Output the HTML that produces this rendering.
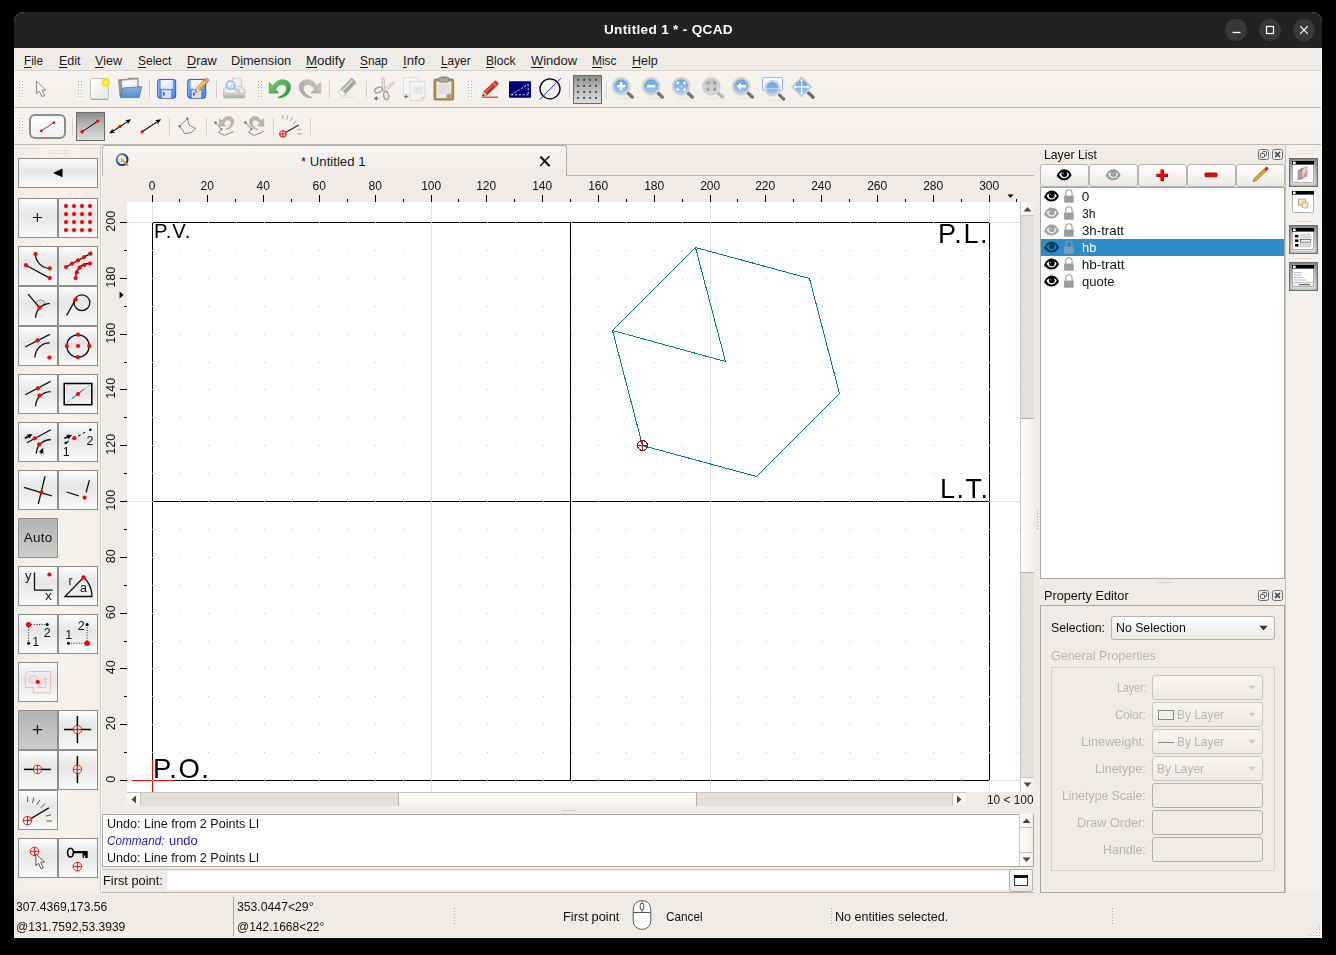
<!DOCTYPE html>
<html><head><meta charset="utf-8"><title>QCAD</title>
<style>
html,body{margin:0;padding:0;background:#000;}
body{width:1336px;height:955px;position:relative;overflow:hidden;font-family:"Liberation Sans",sans-serif;}
.t{position:absolute;white-space:pre;}
svg{overflow:visible}
.btn{position:absolute;box-sizing:border-box;border:1px solid #8e8e8e;background:linear-gradient(#fbfbfb 0%,#e6e6e6 42%,#ececec 60%,#fafafa 100%);}
.btn.on{background:linear-gradient(#b4b4b4,#cdcdcd);}
</style></head><body>
<div style="position:absolute;left:14px;top:12px;width:1308px;height:926px;background:#efebe7;border-radius:10px 10px 0 0;overflow:hidden;"></div>
<div style="position:absolute;left:14px;top:12px;width:1308px;height:36px;background:#222222;border-radius:10px 10px 0 0;"></div>
<span class="t" style="left:603.80px;top:23.09px;font-size:13.6px;line-height:13.6px;color:#ffffff;letter-spacing:0.308px;font-weight:bold;will-change:transform;">Untitled 1 * - QCAD</span>
<div style="position:absolute;left:1225px;top:19px;width:22px;height:22px;background:#383838;border-radius:11px;"></div>
<div style="position:absolute;left:1259px;top:19px;width:22px;height:22px;background:#383838;border-radius:11px;"></div>
<div style="position:absolute;left:1293px;top:19px;width:22px;height:22px;background:#383838;border-radius:11px;"></div>
<svg style="position:absolute;left:1225px;top:19px;" width="22" height="22" viewBox="0 0 22 22"><path d="M7.5 13.5h8" stroke="#fff" stroke-width="1.3" fill="none"/></svg>
<svg style="position:absolute;left:1259px;top:19px;" width="22" height="22" viewBox="0 0 22 22"><rect x="7.5" y="7.5" width="7" height="7" stroke="#fff" stroke-width="1.2" fill="none"/></svg>
<svg style="position:absolute;left:1293px;top:19px;" width="22" height="22" viewBox="0 0 22 22"><path d="M7.2 7.2l7.6 7.6M14.8 7.2l-7.6 7.6" stroke="#fff" stroke-width="1.2" fill="none"/></svg>
<div style="position:absolute;left:14px;top:48px;width:1308px;height:22px;background:#efebe7;"></div>
<div style="position:absolute;left:14px;top:70px;width:1308px;height:1px;background:#d6d2cc;"></div>
<span class="t" style="left:24.30px;top:53.57px;font-size:13.5px;line-height:13.5px;color:#1a1a1a;transform:scaleX(0.8689);transform-origin:0 0;text-underline-offset:1.5px;"><u>F</u>ile</span>
<span class="t" style="left:58.60px;top:53.57px;font-size:13.5px;line-height:13.5px;color:#1a1a1a;transform:scaleX(0.9242);transform-origin:0 0;text-underline-offset:1.5px;"><u>E</u>dit</span>
<span class="t" style="left:95.00px;top:53.57px;font-size:13.5px;line-height:13.5px;color:#1a1a1a;transform:scaleX(0.9339);transform-origin:0 0;text-underline-offset:1.5px;"><u>V</u>iew</span>
<span class="t" style="left:137.60px;top:53.57px;font-size:13.5px;line-height:13.5px;color:#1a1a1a;transform:scaleX(0.8875);transform-origin:0 0;text-underline-offset:1.5px;"><u>S</u>elect</span>
<span class="t" style="left:186.60px;top:53.57px;font-size:13.5px;line-height:13.5px;color:#1a1a1a;transform:scaleX(0.9396);transform-origin:0 0;text-underline-offset:1.5px;"><u>D</u>raw</span>
<span class="t" style="left:231.20px;top:53.57px;font-size:13.5px;line-height:13.5px;color:#1a1a1a;transform:scaleX(0.9424);transform-origin:0 0;text-underline-offset:1.5px;">D<u>i</u>mension</span>
<span class="t" style="left:306.30px;top:53.57px;font-size:13.5px;line-height:13.5px;color:#1a1a1a;transform:scaleX(0.9809);transform-origin:0 0;text-underline-offset:1.5px;"><u>M</u>odify</span>
<span class="t" style="left:360.00px;top:53.57px;font-size:13.5px;line-height:13.5px;color:#1a1a1a;transform:scaleX(0.8786);transform-origin:0 0;text-underline-offset:1.5px;"><u>S</u>nap</span>
<span class="t" style="left:403.20px;top:53.57px;font-size:13.5px;line-height:13.5px;color:#1a1a1a;transform:scaleX(0.9771);transform-origin:0 0;text-underline-offset:1.5px;"><u>I</u>nfo</span>
<span class="t" style="left:440.60px;top:53.57px;font-size:13.5px;line-height:13.5px;color:#1a1a1a;transform:scaleX(0.8766);transform-origin:0 0;text-underline-offset:1.5px;"><u>L</u>ayer</span>
<span class="t" style="left:485.90px;top:53.57px;font-size:13.5px;line-height:13.5px;color:#1a1a1a;transform:scaleX(0.8967);transform-origin:0 0;text-underline-offset:1.5px;"><u>B</u>lock</span>
<span class="t" style="left:531.00px;top:53.57px;font-size:13.5px;line-height:13.5px;color:#1a1a1a;transform:scaleX(0.9601);transform-origin:0 0;text-underline-offset:1.5px;"><u>W</u>indow</span>
<span class="t" style="left:592.30px;top:53.57px;font-size:13.5px;line-height:13.5px;color:#1a1a1a;transform:scaleX(0.8831);transform-origin:0 0;text-underline-offset:1.5px;"><u>M</u>isc</span>
<span class="t" style="left:632.30px;top:53.57px;font-size:13.5px;line-height:13.5px;color:#1a1a1a;transform:scaleX(0.9257);transform-origin:0 0;text-underline-offset:1.5px;"><u>H</u>elp</span>
<div style="position:absolute;left:14px;top:71px;width:1308px;height:36px;background:linear-gradient(#f7f4f0,#f3f0eb);"></div>
<div style="position:absolute;left:14px;top:107px;width:1308px;height:1px;background:#bdb9b4;"></div>
<div style="position:absolute;left:14px;top:108px;width:1308px;height:36px;background:linear-gradient(#f7f4f0,#f3f0eb);"></div>
<div style="position:absolute;left:14px;top:144px;width:1308px;height:1px;background:#bdb9b4;"></div>
<div style="position:absolute;left:100px;top:145px;width:1px;height:748px;background:#cfcbc6;"></div>
<div style="position:absolute;left:101px;top:145px;width:1px;height:748px;background:#fbfaf8;"></div>
<div style="position:absolute;left:102px;top:145px;width:465px;height:31px;background:linear-gradient(#f8f6f2,#efebe7);border:1px solid #b4b0ab;border-bottom:none;border-radius:3px 3px 0 0;box-sizing:border-box;"></div>
<div style="position:absolute;left:567px;top:175px;width:467px;height:1px;background:#bab6b1;"></div>
<span class="t" style="left:301.00px;top:155.37px;font-size:13.5px;line-height:13.5px;color:#1a1a1a;transform:scaleX(0.9768);transform-origin:0 0;">* Untitled 1</span>
<svg style="position:absolute;left:537px;top:153px;" width="16" height="16" viewBox="0 0 16 16"><path d="M4 4.2 L12 12.4" stroke="#111" stroke-width="2.1" stroke-linecap="round" fill="none"/><path d="M12.2 3.4 L3.6 12.6" stroke="#111" stroke-width="1.4" stroke-linecap="round" fill="none"/></svg>
<svg style="position:absolute;left:0px;top:0px;" width="1336" height="955" viewBox="0 0 1336 955"><path d="M152.5 195v7M179.5 199v3M207.5 195v7M235.5 199v3M263.5 195v7M291.5 199v3M319.5 195v7M347.5 199v3M375.5 195v7M403.5 199v3M431.5 195v7M458.5 199v3M486.5 195v7M514.5 199v3M542.5 195v7M570.5 199v3M598.5 195v7M626.5 199v3M654.5 195v7M682.5 199v3M710.5 195v7M737.5 199v3M765.5 195v7M793.5 199v3M821.5 195v7M849.5 199v3M877.5 195v7M905.5 199v3M933.5 195v7M961.5 199v3M989.5 195v7M1016.5 199v3M120 780.5h7M124 752.5h3M120 724.5h7M124 696.5h3M120 668.5h7M124 641.5h3M120 613.5h7M124 585.5h3M120 557.5h7M124 529.5h3M120 501.5h7M124 473.5h3M120 445.5h7M124 417.5h3M120 389.5h7M124 362.5h3M120 334.5h7M124 306.5h3M120 278.5h7M124 250.5h3M120 222.5h7" stroke="#000" stroke-width="1" fill="none" shape-rendering="crispEdges"/></svg>
<span class="t" style="left:148.86px;top:179.84px;font-size:12px;line-height:12px;color:#111;">0</span>
<span class="t" style="left:200.53px;top:179.84px;font-size:12px;line-height:12px;color:#111;">20</span>
<span class="t" style="left:256.53px;top:179.84px;font-size:12px;line-height:12px;color:#111;">40</span>
<span class="t" style="left:312.53px;top:179.84px;font-size:12px;line-height:12px;color:#111;">60</span>
<span class="t" style="left:368.53px;top:179.84px;font-size:12px;line-height:12px;color:#111;">80</span>
<span class="t" style="left:421.19px;top:179.84px;font-size:12px;line-height:12px;color:#111;">100</span>
<span class="t" style="left:476.19px;top:179.84px;font-size:12px;line-height:12px;color:#111;">120</span>
<span class="t" style="left:532.19px;top:179.84px;font-size:12px;line-height:12px;color:#111;">140</span>
<span class="t" style="left:588.19px;top:179.84px;font-size:12px;line-height:12px;color:#111;">160</span>
<span class="t" style="left:644.19px;top:179.84px;font-size:12px;line-height:12px;color:#111;">180</span>
<span class="t" style="left:700.19px;top:179.84px;font-size:12px;line-height:12px;color:#111;">200</span>
<span class="t" style="left:755.19px;top:179.84px;font-size:12px;line-height:12px;color:#111;">220</span>
<span class="t" style="left:811.19px;top:179.84px;font-size:12px;line-height:12px;color:#111;">240</span>
<span class="t" style="left:867.19px;top:179.84px;font-size:12px;line-height:12px;color:#111;">260</span>
<span class="t" style="left:923.19px;top:179.84px;font-size:12px;line-height:12px;color:#111;">280</span>
<span class="t" style="left:979.19px;top:179.84px;font-size:12px;line-height:12px;color:#111;">300</span>
<span class="t" style="left:107.82px;top:773.05px;width:6.95px;height:12.5px;font-size:12.5px;line-height:12.5px;color:#111;transform:rotate(-90deg);transform-origin:50% 50%;text-align:center;">0</span>
<span class="t" style="left:104.35px;top:717.05px;width:13.90px;height:12.5px;font-size:12.5px;line-height:12.5px;color:#111;transform:rotate(-90deg);transform-origin:50% 50%;text-align:center;">20</span>
<span class="t" style="left:104.35px;top:661.05px;width:13.90px;height:12.5px;font-size:12.5px;line-height:12.5px;color:#111;transform:rotate(-90deg);transform-origin:50% 50%;text-align:center;">40</span>
<span class="t" style="left:104.35px;top:606.05px;width:13.90px;height:12.5px;font-size:12.5px;line-height:12.5px;color:#111;transform:rotate(-90deg);transform-origin:50% 50%;text-align:center;">60</span>
<span class="t" style="left:104.35px;top:550.05px;width:13.90px;height:12.5px;font-size:12.5px;line-height:12.5px;color:#111;transform:rotate(-90deg);transform-origin:50% 50%;text-align:center;">80</span>
<span class="t" style="left:100.87px;top:494.05px;width:20.85px;height:12.5px;font-size:12.5px;line-height:12.5px;color:#111;transform:rotate(-90deg);transform-origin:50% 50%;text-align:center;">100</span>
<span class="t" style="left:100.87px;top:438.05px;width:20.85px;height:12.5px;font-size:12.5px;line-height:12.5px;color:#111;transform:rotate(-90deg);transform-origin:50% 50%;text-align:center;">120</span>
<span class="t" style="left:100.87px;top:382.05px;width:20.85px;height:12.5px;font-size:12.5px;line-height:12.5px;color:#111;transform:rotate(-90deg);transform-origin:50% 50%;text-align:center;">140</span>
<span class="t" style="left:100.87px;top:327.05px;width:20.85px;height:12.5px;font-size:12.5px;line-height:12.5px;color:#111;transform:rotate(-90deg);transform-origin:50% 50%;text-align:center;">160</span>
<span class="t" style="left:100.87px;top:271.05px;width:20.85px;height:12.5px;font-size:12.5px;line-height:12.5px;color:#111;transform:rotate(-90deg);transform-origin:50% 50%;text-align:center;">180</span>
<span class="t" style="left:100.87px;top:215.05px;width:20.85px;height:12.5px;font-size:12.5px;line-height:12.5px;color:#111;transform:rotate(-90deg);transform-origin:50% 50%;text-align:center;">200</span>
<svg style="position:absolute;left:0px;top:0px;" width="1336" height="955" viewBox="0 0 1336 955"><path d="M1007.5 194.5h6l-3 3.5z M119.6 291.6v7l4-3.5z" fill="#000"/></svg>
<div style="position:absolute;left:127px;top:202px;width:893px;height:590px;background:#fff;"></div>
<svg style="position:absolute;left:0px;top:0px;" width="1336" height="955" viewBox="0 0 1336 955"><path d="M152.5 202V792M431.5 202V792M710.5 202V792M989.5 202V792M127 780.5H1020M127 501.5H1020M127 222.5H1020" stroke="#e6e6e6" stroke-width="1" fill="none" shape-rendering="crispEdges"/><path d="M132 780.5H173M152.5 760V792" stroke="#ff0000" stroke-width="1" fill="none" shape-rendering="crispEdges"/><path d="M152.5 222.5H989.5V780.5H152.5V760M152.5 222.5V760M570.5 222.5V780.5M152.5 501.5H989.5" stroke="#000" stroke-width="1" fill="none" shape-rendering="crispEdges"/><path d="M132 780.5H173M152.5 760V792" stroke="#ff0000" stroke-width="1" fill="none" shape-rendering="crispEdges"/><path d="M695.5 247.5 L809.5 278.5 L839.5 393.5 L756.5 476.5 L642.5 445.5 L612.5 330.5 L695.5 247.5 L725.5 361.5 L612.5 330.5" stroke="#008088" stroke-width="1" fill="none" shape-rendering="crispEdges"/><g stroke="#a01818" stroke-width="1" fill="none" shape-rendering="crispEdges"><circle cx="642.5" cy="445.5" r="5"/><path d="M637 445.5H648M642.5 440V451"/></g><path d="M152 780.5h1M152 752.5h1M152 724.5h1M152 696.5h1M152 668.5h1M152 641.5h1M152 613.5h1M152 585.5h1M152 557.5h1M152 529.5h1M152 501.5h1M152 473.5h1M152 445.5h1M152 417.5h1M152 389.5h1M152 362.5h1M152 334.5h1M152 306.5h1M152 278.5h1M152 250.5h1M152 222.5h1M180 780.5h1M180 752.5h1M180 724.5h1M180 696.5h1M180 668.5h1M180 641.5h1M180 613.5h1M180 585.5h1M180 557.5h1M180 529.5h1M180 501.5h1M180 473.5h1M180 445.5h1M180 417.5h1M180 389.5h1M180 362.5h1M180 334.5h1M180 306.5h1M180 278.5h1M180 250.5h1M180 222.5h1M208 780.5h1M208 752.5h1M208 724.5h1M208 696.5h1M208 668.5h1M208 641.5h1M208 613.5h1M208 585.5h1M208 557.5h1M208 529.5h1M208 501.5h1M208 473.5h1M208 445.5h1M208 417.5h1M208 389.5h1M208 362.5h1M208 334.5h1M208 306.5h1M208 278.5h1M208 250.5h1M208 222.5h1M236 780.5h1M236 752.5h1M236 724.5h1M236 696.5h1M236 668.5h1M236 641.5h1M236 613.5h1M236 585.5h1M236 557.5h1M236 529.5h1M236 501.5h1M236 473.5h1M236 445.5h1M236 417.5h1M236 389.5h1M236 362.5h1M236 334.5h1M236 306.5h1M236 278.5h1M236 250.5h1M236 222.5h1M264 780.5h1M264 752.5h1M264 724.5h1M264 696.5h1M264 668.5h1M264 641.5h1M264 613.5h1M264 585.5h1M264 557.5h1M264 529.5h1M264 501.5h1M264 473.5h1M264 445.5h1M264 417.5h1M264 389.5h1M264 362.5h1M264 334.5h1M264 306.5h1M264 278.5h1M264 250.5h1M264 222.5h1M292 780.5h1M292 752.5h1M292 724.5h1M292 696.5h1M292 668.5h1M292 641.5h1M292 613.5h1M292 585.5h1M292 557.5h1M292 529.5h1M292 501.5h1M292 473.5h1M292 445.5h1M292 417.5h1M292 389.5h1M292 362.5h1M292 334.5h1M292 306.5h1M292 278.5h1M292 250.5h1M292 222.5h1M319 780.5h1M319 752.5h1M319 724.5h1M319 696.5h1M319 668.5h1M319 641.5h1M319 613.5h1M319 585.5h1M319 557.5h1M319 529.5h1M319 501.5h1M319 473.5h1M319 445.5h1M319 417.5h1M319 389.5h1M319 362.5h1M319 334.5h1M319 306.5h1M319 278.5h1M319 250.5h1M319 222.5h1M347 780.5h1M347 752.5h1M347 724.5h1M347 696.5h1M347 668.5h1M347 641.5h1M347 613.5h1M347 585.5h1M347 557.5h1M347 529.5h1M347 501.5h1M347 473.5h1M347 445.5h1M347 417.5h1M347 389.5h1M347 362.5h1M347 334.5h1M347 306.5h1M347 278.5h1M347 250.5h1M347 222.5h1M375 780.5h1M375 752.5h1M375 724.5h1M375 696.5h1M375 668.5h1M375 641.5h1M375 613.5h1M375 585.5h1M375 557.5h1M375 529.5h1M375 501.5h1M375 473.5h1M375 445.5h1M375 417.5h1M375 389.5h1M375 362.5h1M375 334.5h1M375 306.5h1M375 278.5h1M375 250.5h1M375 222.5h1M403 780.5h1M403 752.5h1M403 724.5h1M403 696.5h1M403 668.5h1M403 641.5h1M403 613.5h1M403 585.5h1M403 557.5h1M403 529.5h1M403 501.5h1M403 473.5h1M403 445.5h1M403 417.5h1M403 389.5h1M403 362.5h1M403 334.5h1M403 306.5h1M403 278.5h1M403 250.5h1M403 222.5h1M431 780.5h1M431 752.5h1M431 724.5h1M431 696.5h1M431 668.5h1M431 641.5h1M431 613.5h1M431 585.5h1M431 557.5h1M431 529.5h1M431 501.5h1M431 473.5h1M431 445.5h1M431 417.5h1M431 389.5h1M431 362.5h1M431 334.5h1M431 306.5h1M431 278.5h1M431 250.5h1M431 222.5h1M459 780.5h1M459 752.5h1M459 724.5h1M459 696.5h1M459 668.5h1M459 641.5h1M459 613.5h1M459 585.5h1M459 557.5h1M459 529.5h1M459 501.5h1M459 473.5h1M459 445.5h1M459 417.5h1M459 389.5h1M459 362.5h1M459 334.5h1M459 306.5h1M459 278.5h1M459 250.5h1M459 222.5h1M487 780.5h1M487 752.5h1M487 724.5h1M487 696.5h1M487 668.5h1M487 641.5h1M487 613.5h1M487 585.5h1M487 557.5h1M487 529.5h1M487 501.5h1M487 473.5h1M487 445.5h1M487 417.5h1M487 389.5h1M487 362.5h1M487 334.5h1M487 306.5h1M487 278.5h1M487 250.5h1M487 222.5h1M515 780.5h1M515 752.5h1M515 724.5h1M515 696.5h1M515 668.5h1M515 641.5h1M515 613.5h1M515 585.5h1M515 557.5h1M515 529.5h1M515 501.5h1M515 473.5h1M515 445.5h1M515 417.5h1M515 389.5h1M515 362.5h1M515 334.5h1M515 306.5h1M515 278.5h1M515 250.5h1M515 222.5h1M543 780.5h1M543 752.5h1M543 724.5h1M543 696.5h1M543 668.5h1M543 641.5h1M543 613.5h1M543 585.5h1M543 557.5h1M543 529.5h1M543 501.5h1M543 473.5h1M543 445.5h1M543 417.5h1M543 389.5h1M543 362.5h1M543 334.5h1M543 306.5h1M543 278.5h1M543 250.5h1M543 222.5h1M571 780.5h1M571 752.5h1M571 724.5h1M571 696.5h1M571 668.5h1M571 641.5h1M571 613.5h1M571 585.5h1M571 557.5h1M571 529.5h1M571 501.5h1M571 473.5h1M571 445.5h1M571 417.5h1M571 389.5h1M571 362.5h1M571 334.5h1M571 306.5h1M571 278.5h1M571 250.5h1M571 222.5h1M598 780.5h1M598 752.5h1M598 724.5h1M598 696.5h1M598 668.5h1M598 641.5h1M598 613.5h1M598 585.5h1M598 557.5h1M598 529.5h1M598 501.5h1M598 473.5h1M598 445.5h1M598 417.5h1M598 389.5h1M598 362.5h1M598 334.5h1M598 306.5h1M598 278.5h1M598 250.5h1M598 222.5h1M626 780.5h1M626 752.5h1M626 724.5h1M626 696.5h1M626 668.5h1M626 641.5h1M626 613.5h1M626 585.5h1M626 557.5h1M626 529.5h1M626 501.5h1M626 473.5h1M626 445.5h1M626 417.5h1M626 389.5h1M626 362.5h1M626 334.5h1M626 306.5h1M626 278.5h1M626 250.5h1M626 222.5h1M654 780.5h1M654 752.5h1M654 724.5h1M654 696.5h1M654 668.5h1M654 641.5h1M654 613.5h1M654 585.5h1M654 557.5h1M654 529.5h1M654 501.5h1M654 473.5h1M654 445.5h1M654 417.5h1M654 389.5h1M654 362.5h1M654 334.5h1M654 306.5h1M654 278.5h1M654 250.5h1M654 222.5h1M682 780.5h1M682 752.5h1M682 724.5h1M682 696.5h1M682 668.5h1M682 641.5h1M682 613.5h1M682 585.5h1M682 557.5h1M682 529.5h1M682 501.5h1M682 473.5h1M682 445.5h1M682 417.5h1M682 389.5h1M682 362.5h1M682 334.5h1M682 306.5h1M682 278.5h1M682 250.5h1M682 222.5h1M710 780.5h1M710 752.5h1M710 724.5h1M710 696.5h1M710 668.5h1M710 641.5h1M710 613.5h1M710 585.5h1M710 557.5h1M710 529.5h1M710 501.5h1M710 473.5h1M710 445.5h1M710 417.5h1M710 389.5h1M710 362.5h1M710 334.5h1M710 306.5h1M710 278.5h1M710 250.5h1M710 222.5h1M738 780.5h1M738 752.5h1M738 724.5h1M738 696.5h1M738 668.5h1M738 641.5h1M738 613.5h1M738 585.5h1M738 557.5h1M738 529.5h1M738 501.5h1M738 473.5h1M738 445.5h1M738 417.5h1M738 389.5h1M738 362.5h1M738 334.5h1M738 306.5h1M738 278.5h1M738 250.5h1M738 222.5h1M766 780.5h1M766 752.5h1M766 724.5h1M766 696.5h1M766 668.5h1M766 641.5h1M766 613.5h1M766 585.5h1M766 557.5h1M766 529.5h1M766 501.5h1M766 473.5h1M766 445.5h1M766 417.5h1M766 389.5h1M766 362.5h1M766 334.5h1M766 306.5h1M766 278.5h1M766 250.5h1M766 222.5h1M794 780.5h1M794 752.5h1M794 724.5h1M794 696.5h1M794 668.5h1M794 641.5h1M794 613.5h1M794 585.5h1M794 557.5h1M794 529.5h1M794 501.5h1M794 473.5h1M794 445.5h1M794 417.5h1M794 389.5h1M794 362.5h1M794 334.5h1M794 306.5h1M794 278.5h1M794 250.5h1M794 222.5h1M822 780.5h1M822 752.5h1M822 724.5h1M822 696.5h1M822 668.5h1M822 641.5h1M822 613.5h1M822 585.5h1M822 557.5h1M822 529.5h1M822 501.5h1M822 473.5h1M822 445.5h1M822 417.5h1M822 389.5h1M822 362.5h1M822 334.5h1M822 306.5h1M822 278.5h1M822 250.5h1M822 222.5h1M850 780.5h1M850 752.5h1M850 724.5h1M850 696.5h1M850 668.5h1M850 641.5h1M850 613.5h1M850 585.5h1M850 557.5h1M850 529.5h1M850 501.5h1M850 473.5h1M850 445.5h1M850 417.5h1M850 389.5h1M850 362.5h1M850 334.5h1M850 306.5h1M850 278.5h1M850 250.5h1M850 222.5h1M877 780.5h1M877 752.5h1M877 724.5h1M877 696.5h1M877 668.5h1M877 641.5h1M877 613.5h1M877 585.5h1M877 557.5h1M877 529.5h1M877 501.5h1M877 473.5h1M877 445.5h1M877 417.5h1M877 389.5h1M877 362.5h1M877 334.5h1M877 306.5h1M877 278.5h1M877 250.5h1M877 222.5h1M905 780.5h1M905 752.5h1M905 724.5h1M905 696.5h1M905 668.5h1M905 641.5h1M905 613.5h1M905 585.5h1M905 557.5h1M905 529.5h1M905 501.5h1M905 473.5h1M905 445.5h1M905 417.5h1M905 389.5h1M905 362.5h1M905 334.5h1M905 306.5h1M905 278.5h1M905 250.5h1M905 222.5h1M933 780.5h1M933 752.5h1M933 724.5h1M933 696.5h1M933 668.5h1M933 641.5h1M933 613.5h1M933 585.5h1M933 557.5h1M933 529.5h1M933 501.5h1M933 473.5h1M933 445.5h1M933 417.5h1M933 389.5h1M933 362.5h1M933 334.5h1M933 306.5h1M933 278.5h1M933 250.5h1M933 222.5h1M961 780.5h1M961 752.5h1M961 724.5h1M961 696.5h1M961 668.5h1M961 641.5h1M961 613.5h1M961 585.5h1M961 557.5h1M961 529.5h1M961 501.5h1M961 473.5h1M961 445.5h1M961 417.5h1M961 389.5h1M961 362.5h1M961 334.5h1M961 306.5h1M961 278.5h1M961 250.5h1M961 222.5h1M989 780.5h1M989 752.5h1M989 724.5h1M989 696.5h1M989 668.5h1M989 641.5h1M989 613.5h1M989 585.5h1M989 557.5h1M989 529.5h1M989 501.5h1M989 473.5h1M989 445.5h1M989 417.5h1M989 389.5h1M989 362.5h1M989 334.5h1M989 306.5h1M989 278.5h1M989 250.5h1M989 222.5h1M1017 780.5h1M1017 752.5h1M1017 724.5h1M1017 696.5h1M1017 668.5h1M1017 641.5h1M1017 613.5h1M1017 585.5h1M1017 557.5h1M1017 529.5h1M1017 501.5h1M1017 473.5h1M1017 445.5h1M1017 417.5h1M1017 389.5h1M1017 362.5h1M1017 334.5h1M1017 306.5h1M1017 278.5h1M1017 250.5h1M1017 222.5h1" stroke="#c4c4c4" stroke-width="1" fill="none" shape-rendering="crispEdges"/></svg>
<span class="t" style="left:153.80px;top:221.42px;font-size:20.3px;line-height:20.3px;color:#000;letter-spacing:0.880px;will-change:transform;">P.V.</span>
<span class="t" style="left:152.60px;top:754.51px;font-size:27.4px;line-height:27.4px;color:#000;letter-spacing:1.530px;will-change:transform;">P.O.</span>
<span class="t" style="left:938.30px;top:220.74px;font-size:27px;line-height:27px;color:#000;letter-spacing:1.689px;will-change:transform;">P.L.</span>
<span class="t" style="left:940.20px;top:476.14px;font-size:27px;line-height:27px;color:#000;letter-spacing:1.471px;will-change:transform;">L.T.</span>
<div style="position:absolute;left:1020px;top:202px;width:14px;height:590px;background:#e3e0dc;border-left:1px solid #c9c5c0;box-sizing:border-box;"></div>
<div style="position:absolute;left:1020px;top:202px;width:14px;height:14px;background:linear-gradient(90deg,#ffffff,#f3f0eb);border-left:1px solid #c9c5c0;border-bottom:1px solid #c9c5c0;box-sizing:border-box;"></div>
<div style="position:absolute;left:1020px;top:777px;width:14px;height:15px;background:linear-gradient(90deg,#ffffff,#f3f0eb);border-left:1px solid #c9c5c0;border-top:1px solid #c9c5c0;box-sizing:border-box;"></div>
<div style="position:absolute;left:1020px;top:418px;width:14px;height:155px;background:linear-gradient(90deg,#ffffff,#f3f0eb);border-left:1px solid #c9c5c0;border-top:1px solid #b5b1ac;border-bottom:1px solid #b5b1ac;box-sizing:border-box;"></div>
<svg style="position:absolute;left:1020px;top:202px;" width="14" height="14" viewBox="0 0 14 14"><path d="M3.5 9.5h8l-4-4.5z" fill="#4a4a4a"/></svg>
<svg style="position:absolute;left:1020px;top:777px;" width="14" height="15" viewBox="0 0 14 15"><path d="M3.5 5.5h8l-4 4.5z" fill="#4a4a4a"/></svg>
<div style="position:absolute;left:127px;top:792px;width:839px;height:14px;background:#e3e0dc;border-top:1px solid #c9c5c0;box-sizing:border-box;"></div>
<div style="position:absolute;left:127px;top:792px;width:14px;height:14px;background:linear-gradient(#ffffff,#f3f0eb);border-top:1px solid #c9c5c0;border-right:1px solid #c9c5c0;box-sizing:border-box;"></div>
<div style="position:absolute;left:952px;top:792px;width:14px;height:14px;background:linear-gradient(#ffffff,#f3f0eb);border-top:1px solid #c9c5c0;border-left:1px solid #c9c5c0;box-sizing:border-box;"></div>
<div style="position:absolute;left:398px;top:792px;width:299px;height:14px;background:linear-gradient(#ffffff,#f3f0eb);border-top:1px solid #c9c5c0;border-left:1px solid #b5b1ac;border-right:1px solid #b5b1ac;box-sizing:border-box;"></div>
<svg style="position:absolute;left:127px;top:792px;" width="14" height="14" viewBox="0 0 14 14"><path d="M9 3.5v8l-4.5-4z" fill="#4a4a4a"/></svg>
<svg style="position:absolute;left:952px;top:792px;" width="14" height="14" viewBox="0 0 14 14"><path d="M5 3.5v8l4.5-4z" fill="#4a4a4a"/></svg>
<span class="t" style="left:987.40px;top:793.62px;font-size:12.5px;line-height:12.5px;color:#1a1a1a;transform:scaleX(0.9489);transform-origin:0 0;">10 &lt; 100</span>
<svg style="position:absolute;left:562px;top:809px;" width="16" height="3" viewBox="0 0 16 3"><path d="M0.5 1.5h1m1.5 0h1m1.5 0h1m1.5 0h1m1.5 0h1m1.5 0h1" stroke="#aaa6a0" stroke-width="1" fill="none"/></svg>
<div style="position:absolute;left:102px;top:814px;width:932px;height:53px;background:#fff;border:1px solid #aaa6a1;box-sizing:border-box;"></div>
<span class="t" style="left:107.40px;top:816.97px;font-size:13.5px;line-height:13.5px;color:#111;transform:scaleX(0.9304);transform-origin:0 0;">Undo: Line from 2 Points LI</span>
<span class="t" style="left:107.40px;top:833.77px;font-size:13.5px;line-height:13.5px;color:#2424cc;transform:scaleX(0.8710);transform-origin:0 0;font-style:italic;">Command:</span>
<span class="t" style="left:169.20px;top:833.77px;font-size:13.5px;line-height:13.5px;color:#1c1cc0;transform:scaleX(0.9557);transform-origin:0 0;">undo</span>
<span class="t" style="left:107.40px;top:850.87px;font-size:13.5px;line-height:13.5px;color:#111;transform:scaleX(0.9304);transform-origin:0 0;">Undo: Line from 2 Points LI</span>
<div style="position:absolute;left:1019px;top:814px;width:14px;height:52px;background:linear-gradient(90deg,#ffffff,#f3f0eb);border-left:1px solid #c9c5c0;box-sizing:border-box;"></div>
<div style="position:absolute;left:1019px;top:827px;width:14px;height:1px;background:#c9c5c0;"></div>
<div style="position:absolute;left:1019px;top:852px;width:14px;height:1px;background:#c9c5c0;"></div>
<svg style="position:absolute;left:1019px;top:814px;" width="14" height="13" viewBox="0 0 14 13"><path d="M3.5 9h8l-4-4.5z" fill="#4a4a4a"/></svg>
<svg style="position:absolute;left:1019px;top:853px;" width="14" height="13" viewBox="0 0 14 13"><path d="M3.5 4.5h8l-4 4.5z" fill="#4a4a4a"/></svg>
<div style="position:absolute;left:102px;top:869px;width:932px;height:1px;background:#c9c5c0;"></div>
<span class="t" style="left:103.00px;top:873.77px;font-size:13.5px;line-height:13.5px;color:#111;transform:scaleX(0.9490);transform-origin:0 0;">First point:</span>
<div style="position:absolute;left:167px;top:871px;width:842px;height:19px;background:#fff;"></div>
<div style="position:absolute;left:1009px;top:869px;width:24px;height:23px;background:linear-gradient(#fdfdfc,#ebe8e4);border:1px solid #b5b1ac;border-radius:3px;box-sizing:border-box;"></div>
<svg style="position:absolute;left:1014px;top:875px;" width="14" height="11" viewBox="0 0 14 11"><rect x="0.5" y="0.5" width="13" height="10" fill="#fff" stroke="#333" stroke-width="1"/><rect x="0" y="0" width="14" height="3" fill="#111"/></svg>
<div style="position:absolute;left:102px;top:892px;width:932px;height:1px;background:#b9b5b0;"></div>
<span class="t" style="left:16.20px;top:900.07px;font-size:13.5px;line-height:13.5px;color:#111;transform:scaleX(0.9009);transform-origin:0 0;">307.4369,173.56</span>
<span class="t" style="left:16.20px;top:919.87px;font-size:13.5px;line-height:13.5px;color:#111;transform:scaleX(0.8919);transform-origin:0 0;">@131.7592,53.3939</span>
<div style="position:absolute;left:233px;top:897px;width:1px;height:39px;background:#a9a5a0;"></div>
<span class="t" style="left:237.20px;top:900.07px;font-size:13.5px;line-height:13.5px;color:#111;transform:scaleX(0.9043);transform-origin:0 0;">353.0447&lt;29°</span>
<span class="t" style="left:237.20px;top:919.87px;font-size:13.5px;line-height:13.5px;color:#111;transform:scaleX(0.8881);transform-origin:0 0;">@142.1668&lt;22°</span>
<svg style="position:absolute;left:454px;top:908px;" width="1" height="18" viewBox="0 0 1 18"><path d="M0.5 0V18" stroke="#aaa6a0" stroke-width="1" stroke-dasharray="1 2" fill="none"/></svg>
<svg style="position:absolute;left:831px;top:908px;" width="1" height="18" viewBox="0 0 1 18"><path d="M0.5 0V18" stroke="#aaa6a0" stroke-width="1" stroke-dasharray="1 2" fill="none"/></svg>
<svg style="position:absolute;left:1112px;top:908px;" width="1" height="18" viewBox="0 0 1 18"><path d="M0.5 0V18" stroke="#aaa6a0" stroke-width="1" stroke-dasharray="1 2" fill="none"/></svg>
<svg style="position:absolute;left:1037px;top:510px;" width="1" height="19" viewBox="0 0 1 19"><path d="M0.5 0V19" stroke="#aaa6a0" stroke-width="1" stroke-dasharray="1 2" fill="none"/></svg>
<span class="t" style="left:562.60px;top:910.17px;font-size:13.5px;line-height:13.5px;color:#111;transform:scaleX(0.9517);transform-origin:0 0;">First point</span>
<span class="t" style="left:666.40px;top:910.17px;font-size:13.5px;line-height:13.5px;color:#111;transform:scaleX(0.8710);transform-origin:0 0;">Cancel</span>
<span class="t" style="left:835.40px;top:910.17px;font-size:13.5px;line-height:13.5px;color:#111;transform:scaleX(0.9312);transform-origin:0 0;">No entities selected.</span>
<svg style="position:absolute;left:632px;top:900px;" width="20" height="30" viewBox="0 0 20 30"><path d="M1.2 11.5C1.2 4 4.5 0.7 10 0.7S18.8 4 18.8 11.5V20C18.8 26 15 29.3 10 29.3S1.2 26 1.2 20Z" fill="#fff" stroke="#555" stroke-width="1"/><path d="M1.2 12.5H18.8M10 0.7V12.5" stroke="#555" stroke-width="1" fill="none"/><rect x="8.2" y="3.2" width="3.6" height="6.6" rx="1.8" fill="#fff" stroke="#555" stroke-width="1"/></svg>
<div style="position:absolute;left:14px;top:145px;width:86px;height:748px;background:linear-gradient(90deg,#f1eee9,#f5f2ed 50%,#f1eee9);"></div>
<svg style="position:absolute;left:51px;top:150px;" width="16" height="4" viewBox="0 0 16 4"><path d="M0.5 0.5h1m1.5 0h1m1.5 0h1m1.5 0h1m1.5 0h1m1.5 0h1m1.5 0h1M0.5 3.5h1m1.5 0h1m1.5 0h1m1.5 0h1m1.5 0h1m1.5 0h1m1.5 0h1" stroke="#c8c4be" stroke-width="1" fill="none"/></svg>
<div class="btn" style="left:18px;top:158px;width:80px;height:30px;"></div>
<svg style="position:absolute;left:18px;top:158px;" width="80" height="30" viewBox="0 0 80 30"><path d="M35.1 14.9L44.5 10.6V19.3Z" fill="#000"/></svg>
<div class="btn" style="left:18px;top:198px;width:40px;height:40px;"></div>
<svg style="position:absolute;left:18px;top:198px;" width="40" height="40" viewBox="0 0 40 40"><path d="M14.8 19.5h9.2M19.4 14.9v9.2" stroke="#111" stroke-width="1.1" fill="none" /></svg>
<div class="btn" style="left:58px;top:198px;width:40px;height:40px;"></div>
<svg style="position:absolute;left:58px;top:198px;" width="40" height="40" viewBox="0 0 40 40"><circle cx="8" cy="8.1" r="2.1" fill="#ff0000"/><circle cx="8" cy="16.1" r="2.1" fill="#ff0000"/><circle cx="8" cy="24.1" r="2.1" fill="#ff0000"/><circle cx="8" cy="32.1" r="2.1" fill="#ff0000"/><circle cx="16" cy="8.1" r="2.1" fill="#ff0000"/><circle cx="16" cy="16.1" r="2.1" fill="#ff0000"/><circle cx="16" cy="24.1" r="2.1" fill="#ff0000"/><circle cx="16" cy="32.1" r="2.1" fill="#ff0000"/><circle cx="24" cy="8.1" r="2.1" fill="#ff0000"/><circle cx="24" cy="16.1" r="2.1" fill="#ff0000"/><circle cx="24" cy="24.1" r="2.1" fill="#ff0000"/><circle cx="24" cy="32.1" r="2.1" fill="#ff0000"/><circle cx="32" cy="8.1" r="2.1" fill="#ff0000"/><circle cx="32" cy="16.1" r="2.1" fill="#ff0000"/><circle cx="32" cy="24.1" r="2.1" fill="#ff0000"/><circle cx="32" cy="32.1" r="2.1" fill="#ff0000"/></svg>
<div class="btn" style="left:18px;top:246px;width:40px;height:40px;"></div>
<svg style="position:absolute;left:18px;top:246px;" width="40" height="40" viewBox="0 0 40 40"><path d="M8 19.2L31.8 32.1M17.5 8.1A14.3 14.3 0 0 0 31.8 22.3" stroke="#111" stroke-width="1.3" fill="none" /><circle cx="17.5" cy="8.1" r="2.1" fill="#ff0000"/><circle cx="8" cy="19.2" r="2.1" fill="#ff0000"/><circle cx="31.8" cy="22.3" r="2.1" fill="#ff0000"/><circle cx="31.8" cy="32.1" r="2.1" fill="#ff0000"/></svg>
<div class="btn" style="left:58px;top:246px;width:40px;height:40px;"></div>
<svg style="position:absolute;left:58px;top:246px;" width="40" height="40" viewBox="0 0 40 40"><path d="M8 21L32.4 7.6M17.6 32.1C18.5 20 25 17.5 32 17.5" stroke="#111" stroke-width="1.3" fill="none" /><circle cx="8" cy="21" r="2.1" fill="#ff0000"/><circle cx="14" cy="17.7" r="2.1" fill="#ff0000"/><circle cx="20" cy="14.4" r="2.1" fill="#ff0000"/><circle cx="26.1" cy="11.1" r="2.1" fill="#ff0000"/><circle cx="32.4" cy="7.6" r="2.1" fill="#ff0000"/><circle cx="32" cy="17.5" r="2.1" fill="#ff0000"/><circle cx="26.4" cy="19" r="2.1" fill="#ff0000"/><circle cx="21.6" cy="21.6" r="2.1" fill="#ff0000"/><circle cx="18.8" cy="26.4" r="2.1" fill="#ff0000"/><circle cx="17.6" cy="32.1" r="2.1" fill="#ff0000"/></svg>
<div class="btn" style="left:18px;top:286px;width:40px;height:40px;"></div>
<svg style="position:absolute;left:18px;top:286px;" width="40" height="40" viewBox="0 0 40 40"><path d="M17.9 16.4A5.2 5.2 0 0 1 27.2 17.2L21.4 21.7Z" fill="#ddd" stroke="#555" stroke-width="0.6"/><circle cx="22.3" cy="17" r="0.6" fill="#aaa"/><path d="M10.1 8.2L21.4 21.7M17.5 31.8C18.4 23 23.5 18.3 31.8 17.3" stroke="#111" stroke-width="1.3" fill="none" /><circle cx="21.4" cy="21.7" r="2.1" fill="#ff0000"/></svg>
<div class="btn" style="left:58px;top:286px;width:40px;height:40px;"></div>
<svg style="position:absolute;left:58px;top:286px;" width="40" height="40" viewBox="0 0 40 40"><path d="M8.6 29.4L17.5 13.6" stroke="#111" stroke-width="1.3" fill="none" /><circle cx="23.9" cy="16.7" r="7.9" fill="none" stroke="#111" stroke-width="1.3"/><circle cx="17.5" cy="13.6" r="2.1" fill="#ff0000"/></svg>
<div class="btn" style="left:18px;top:326px;width:40px;height:40px;"></div>
<svg style="position:absolute;left:18px;top:326px;" width="40" height="40" viewBox="0 0 40 40"><path d="M7.1 21L31.8 8.3M16.9 31.6A14.8 14.8 0 0 1 31.8 16.9" stroke="#111" stroke-width="1.3" fill="none" /><circle cx="19.6" cy="14.4" r="2.1" fill="#ff0000"/><circle cx="31.4" cy="31.5" r="2.1" fill="#ff0000"/></svg>
<div class="btn" style="left:58px;top:326px;width:40px;height:40px;"></div>
<svg style="position:absolute;left:58px;top:326px;" width="40" height="40" viewBox="0 0 40 40"><circle cx="20" cy="20" r="11.2" fill="none" stroke="#111" stroke-width="1.3"/><circle cx="20" cy="20" r="2.1" fill="#ff0000"/><circle cx="20" cy="8.7" r="2.1" fill="#ff0000"/><circle cx="31.2" cy="20" r="2.1" fill="#ff0000"/><circle cx="20" cy="31.2" r="2.1" fill="#ff0000"/><circle cx="8.8" cy="20" r="2.1" fill="#ff0000"/></svg>
<div class="btn" style="left:18px;top:374px;width:40px;height:40px;"></div>
<svg style="position:absolute;left:18px;top:374px;" width="40" height="40" viewBox="0 0 40 40"><path d="M7.3 20.8L32.6 7.4M17.5 32.4C18 24 24 18 32.6 17.6" stroke="#111" stroke-width="1.3" fill="none" /><circle cx="19.9" cy="14.3" r="2.1" fill="#ff0000"/><circle cx="21.4" cy="21.5" r="2.1" fill="#ff0000"/></svg>
<div class="btn" style="left:58px;top:374px;width:40px;height:40px;"></div>
<svg style="position:absolute;left:58px;top:374px;" width="40" height="40" viewBox="0 0 40 40"><rect x="6.2" y="9.5" width="27.6" height="21.2" fill="none" stroke="#000" stroke-width="1.5"/><path d="M8.3 28.6L31.9 11.4" stroke="#888" stroke-width="0.5" fill="none" /><path d="M14 24.8L25.9 15.2" stroke="#333" stroke-width="0.8" fill="none" /><circle cx="20" cy="20.1" r="2.1" fill="#ff0000"/></svg>
<div class="btn" style="left:18px;top:422px;width:40px;height:40px;"></div>
<svg style="position:absolute;left:18px;top:422px;" width="40" height="40" viewBox="0 0 40 40"><path d="M9 20.7L32.8 7.8M18.3 31.6C18.6 24 24 18 32.8 17.5" stroke="#111" stroke-width="1.3" fill="none" /><circle cx="16.7" cy="16.3" r="2.1" fill="#ff0000"/><circle cx="21.1" cy="22.4" r="2.1" fill="#ff0000"/><path d="M6.8 16.3L12.5 13.225" stroke="#000" stroke-width="1.6" fill="none" /><g transform="translate(14.4 12.2) rotate(-28.3457)"><path d="M0 0L-5.4 -2.6L-4.2 0L-5.4 2.6Z" fill="#000"/></g><path d="M22.9 31.6L24.475 27.4" stroke="#000" stroke-width="1.6" fill="none" /><g transform="translate(25 26) rotate(-69.444)"><path d="M0 0L-5.4 -2.6L-4.2 0L-5.4 2.6Z" fill="#000"/></g></svg>
<div class="btn" style="left:58px;top:422px;width:40px;height:40px;"></div>
<svg style="position:absolute;left:58px;top:422px;" width="40" height="40" viewBox="0 0 40 40"><path d="M6.4 16.3L12.1 13.825" stroke="#000" stroke-width="1.6" fill="none" /><g transform="translate(14 13) rotate(-23.471)"><path d="M0 0L-5.4 -2.6L-4.2 0L-5.4 2.6Z" fill="#000"/></g><circle cx="16.3" cy="16.2" r="2.1" fill="#ff0000"/><circle cx="7.6" cy="21" r="1.2" fill="#000"/><path d="M8 20.8L10.6 19.4" stroke="#000" stroke-width="1.2" fill="none" /><path d="M20.1 14.4L28.6 9.2" stroke="#000" stroke-width="1" fill="none" stroke-dasharray="3 2.4"/><circle cx="32.3" cy="7.7" r="1.3" fill="#000"/><text x="28.4" y="22.9" font-family="Liberation Sans, sans-serif" font-size="12.5" fill="#111" >2</text><text x="4.8" y="33.7" font-family="Liberation Sans, sans-serif" font-size="12.5" fill="#111" >1</text></svg>
<div class="btn" style="left:18px;top:470px;width:40px;height:40px;"></div>
<svg style="position:absolute;left:18px;top:470px;" width="40" height="40" viewBox="0 0 40 40"><path d="M5.9 17.3L33.9 25.8M27.1 6.2L20.3 34" stroke="#111" stroke-width="1.3" fill="none" /><circle cx="23.4" cy="22.6" r="2.1" fill="#ff0000"/></svg>
<div class="btn" style="left:58px;top:470px;width:40px;height:40px;"></div>
<svg style="position:absolute;left:58px;top:470px;" width="40" height="40" viewBox="0 0 40 40"><path d="M8.6 22L20.8 25.8M31.4 10.2L28.1 22.5" stroke="#111" stroke-width="1.3" fill="none" /><circle cx="26.6" cy="27.6" r="2.1" fill="#ff0000"/></svg>
<div class="btn on" style="left:18px;top:518px;width:40px;height:40px;"></div>
<span class="t" style="left:23.70px;top:531.47px;font-size:13.5px;line-height:13.5px;color:#111;letter-spacing:0.308px;">Auto</span>
<div class="btn" style="left:18px;top:566px;width:40px;height:40px;"></div>
<svg style="position:absolute;left:18px;top:566px;" width="40" height="40" viewBox="0 0 40 40"><path d="M16.5 6.4V24.2H34.6" stroke="#111" stroke-width="1.3" fill="none" /><circle cx="31.4" cy="8.5" r="2.1" fill="#ff0000"/><text x="7" y="14.4" font-family="Liberation Sans, sans-serif" font-size="13" fill="#111" >y</text><text x="27.3" y="33.8" font-family="Liberation Sans, sans-serif" font-size="13" fill="#111" >x</text></svg>
<div class="btn" style="left:58px;top:566px;width:40px;height:40px;"></div>
<svg style="position:absolute;left:58px;top:566px;" width="40" height="40" viewBox="0 0 40 40"><path d="M25.7 11.3L6.9 30.5H34A27 27 0 0 0 25.7 11.3" stroke="#111" stroke-width="1.3" fill="none" /><circle cx="25.5" cy="11.3" r="2.1" fill="#ff0000"/><text x="10.5" y="18.7" font-family="Liberation Sans, sans-serif" font-size="12" fill="#111" >r</text><text x="22" y="26.2" font-family="Liberation Sans, sans-serif" font-size="12.5" fill="#111" >a</text></svg>
<div class="btn" style="left:18px;top:614px;width:40px;height:40px;"></div>
<svg style="position:absolute;left:18px;top:614px;" width="40" height="40" viewBox="0 0 40 40"><path d="M10.6 10.6H29.2M10.6 10.6V29.2" stroke="#222" stroke-width="1" fill="none" stroke-dasharray="1 1.6"/><circle cx="10.6" cy="10.6" r="2.7" fill="#ff0000"/><circle cx="29.2" cy="10.6" r="1.5" fill="#000"/><circle cx="10.6" cy="29.2" r="1.5" fill="#000"/><text x="25.8" y="22.9" font-family="Liberation Sans, sans-serif" font-size="12.5" fill="#111" >2</text><text x="14.2" y="31.8" font-family="Liberation Sans, sans-serif" font-size="12.5" fill="#111" >1</text></svg>
<div class="btn" style="left:58px;top:614px;width:40px;height:40px;"></div>
<svg style="position:absolute;left:58px;top:614px;" width="40" height="40" viewBox="0 0 40 40"><path d="M29.1 10.6V29.2M10.5 29.2H29.1" stroke="#222" stroke-width="1" fill="none" stroke-dasharray="1 1.6"/><circle cx="29.1" cy="29.2" r="2.7" fill="#ff0000"/><circle cx="29.1" cy="10.6" r="1.5" fill="#000"/><circle cx="10.5" cy="29.2" r="1.5" fill="#000"/><text x="19.8" y="16.3" font-family="Liberation Sans, sans-serif" font-size="12.5" fill="#111" >2</text><text x="7.2" y="24.7" font-family="Liberation Sans, sans-serif" font-size="12.5" fill="#111" >1</text></svg>
<div class="btn" style="left:18px;top:662px;width:40px;height:40px;"></div>
<svg style="position:absolute;left:18px;top:662px;" width="40" height="40" viewBox="0 0 40 40"><path d="M11.3 9.5H32.6V30.8H15.3V25.5H7.3V13.5A4 4 0 0 1 11.3 9.5Z" stroke="#f3a9a9" stroke-width="0.8" fill="none" /><circle cx="15.3" cy="17.3" r="4" fill="none" stroke="#f3a9a9" stroke-width="0.8"/><path d="M27.6 16.3V25.5H19.6Z" stroke="#f3a9a9" stroke-width="0.8" fill="none" /><circle cx="19.8" cy="20" r="2.1" fill="#ff0000"/></svg>
<div class="btn on" style="left:18px;top:710px;width:40px;height:40px;"></div>
<svg style="position:absolute;left:18px;top:710px;" width="40" height="40" viewBox="0 0 40 40"><path d="M14.8 19.6h9.2M19.4 15v9.2" stroke="#111" stroke-width="1.1" fill="none" /></svg>
<div class="btn" style="left:58px;top:710px;width:40px;height:40px;"></div>
<svg style="position:absolute;left:58px;top:710px;" width="40" height="40" viewBox="0 0 40 40"><path d="M6 19.6H33.1M19.4 5.9V32.9" stroke="#000" stroke-width="1.5" fill="none" /><circle cx="19.4" cy="19.6" r="4.2" fill="rgba(255,255,255,0.55)" stroke="#ff0000" stroke-width="0.9"/><path d="M15.2 19.6h8.4M19.4 15.4v8.4" stroke="#ff0000" stroke-width="0.9" fill="none"/></svg>
<div class="btn" style="left:18px;top:750px;width:40px;height:40px;"></div>
<svg style="position:absolute;left:18px;top:750px;" width="40" height="40" viewBox="0 0 40 40"><path d="M5.9 19.4H32.9" stroke="#000" stroke-width="1.5" fill="none" /><circle cx="19.4" cy="19.4" r="4.2" fill="rgba(255,255,255,0.55)" stroke="#ff0000" stroke-width="0.9"/><path d="M15.2 19.4h8.4M19.4 15.2v8.4" stroke="#ff0000" stroke-width="0.9" fill="none"/></svg>
<div class="btn" style="left:58px;top:750px;width:40px;height:40px;"></div>
<svg style="position:absolute;left:58px;top:750px;" width="40" height="40" viewBox="0 0 40 40"><path d="M19.4 5.9V33.1" stroke="#000" stroke-width="1.5" fill="none" /><circle cx="19.4" cy="19.4" r="4.2" fill="rgba(255,255,255,0.55)" stroke="#ff0000" stroke-width="0.9"/><path d="M15.2 19.4h8.4M19.4 15.2v8.4" stroke="#ff0000" stroke-width="0.9" fill="none"/></svg>
<div class="btn" style="left:18px;top:790px;width:40px;height:40px;"></div>
<svg style="position:absolute;left:18px;top:790px;" width="40" height="40" viewBox="0 0 40 40"><path d="M9.6 12.2L9.6 6.6M14.5 12.8L15.9 7.4M19.0 14.7L21.8 9.9M22.9 17.7L26.9 13.7M27.8 26.1L33.2 24.7M28.4 31.0L34.0 31.0" stroke="#444" stroke-width="0.9" fill="none" /><path d="M9.5 30.6L30.9 17.9" stroke="#111" stroke-width="1.3" fill="none" /><circle cx="9.5" cy="30.6" r="4.3" fill="rgba(255,255,255,0.55)" stroke="#ff0000" stroke-width="0.9"/><path d="M5.2 30.6h8.6M9.5 26.3v8.6" stroke="#ff0000" stroke-width="0.9" fill="none"/></svg>
<div class="btn" style="left:18px;top:838px;width:40px;height:40px;"></div>
<svg style="position:absolute;left:18px;top:838px;" width="40" height="40" viewBox="0 0 40 40"><circle cx="16.5" cy="13.4" r="4.3" fill="rgba(255,255,255,0.55)" stroke="#ff0000" stroke-width="0.9"/><path d="M12.2 13.4h8.6M16.5 9.1v8.6" stroke="#ff0000" stroke-width="0.9" fill="none"/><path d="M17.9 16L17.9 27.5L20.5 25.2L23 30.8L25.2 29.8L22.8 24.3L26.5 24Z" fill="#fff" stroke="#444" stroke-width="0.9" stroke-linejoin="round"/></svg>
<div class="btn" style="left:58px;top:838px;width:40px;height:40px;"></div>
<svg style="position:absolute;left:58px;top:838px;" width="40" height="40" viewBox="0 0 40 40"><ellipse cx="12.5" cy="14.6" rx="2.9" ry="4.4" fill="none" stroke="#000" stroke-width="1.6"/><path d="M15.3 13H29.7V20H27.2V17.4H25.8V20H24.6V15.2H15.3Z" fill="#000"/><circle cx="19.4" cy="28.6" r="4.3" fill="rgba(255,255,255,0.55)" stroke="#ff0000" stroke-width="0.9"/><path d="M15.1 28.6h8.6M19.4 24.3v8.6" stroke="#ff0000" stroke-width="0.9" fill="none"/></svg>
<span class="t" style="left:1044.20px;top:148.17px;font-size:13.5px;line-height:13.5px;color:#111;transform:scaleX(0.9056);transform-origin:0 0;">Layer List</span>
<svg style="position:absolute;left:1258px;top:149px;" width="11" height="11" viewBox="0 0 11 11"><rect x="0.5" y="0.5" width="10" height="10" rx="2" fill="#f4f2ee" stroke="#6b6b6b" stroke-width="1"/><rect x="4.5" y="2.5" width="4" height="4" rx="0.8" fill="none" stroke="#555" stroke-width="1"/><rect x="2.5" y="4.5" width="4" height="4" rx="0.8" fill="#f4f2ee" stroke="#555" stroke-width="1"/></svg>
<svg style="position:absolute;left:1272px;top:149px;" width="11" height="11" viewBox="0 0 11 11"><rect x="0.5" y="0.5" width="10" height="10" rx="2" fill="#f4f2ee" stroke="#6b6b6b" stroke-width="1"/><path d="M3 3L8 8M8 3L3 8" stroke="#555" stroke-width="1.8" fill="none"/></svg>
<div style="position:absolute;left:1040px;top:164px;width:49px;height:23px;background:linear-gradient(#ffffff,#f6f4f1 50%,#ebe8e4);border:1px solid #b7b3ae;border-radius:3px;box-sizing:border-box;"></div>
<div style="position:absolute;left:1089px;top:164px;width:49px;height:23px;background:linear-gradient(#ffffff,#f6f4f1 50%,#ebe8e4);border:1px solid #b7b3ae;border-radius:3px;box-sizing:border-box;"></div>
<div style="position:absolute;left:1138px;top:164px;width:49px;height:23px;background:linear-gradient(#ffffff,#f6f4f1 50%,#ebe8e4);border:1px solid #b7b3ae;border-radius:3px;box-sizing:border-box;"></div>
<div style="position:absolute;left:1187px;top:164px;width:49px;height:23px;background:linear-gradient(#ffffff,#f6f4f1 50%,#ebe8e4);border:1px solid #b7b3ae;border-radius:3px;box-sizing:border-box;"></div>
<div style="position:absolute;left:1236px;top:164px;width:49px;height:23px;background:linear-gradient(#ffffff,#f6f4f1 50%,#ebe8e4);border:1px solid #b7b3ae;border-radius:3px;box-sizing:border-box;"></div>
<svg style="position:absolute;left:1040px;top:164px;" width="48" height="23" viewBox="0 0 48 23"><g transform="translate(24.2 11.2)"><path d="M-7.5 0.3C-5.6 -4.2 -2.4 -6 0.2 -6C3.4 -6 6 -3.8 7.4 -0.2C5.8 3.4 3 4.9 -0.2 4.9C-3.4 4.9 -5.8 3.6 -7.5 0.3Z" fill="#000"/><path d="M-1.4 4.6l-0.4 1.1M0.4 4.8l0 1M-3.2 4l-0.7 0.9M2.4 4.3l0.5 0.9M-6.6 1.6l-1 0.4" stroke="#000" stroke-width="0.6"/><path d="M-5 -0.9C-3.4 -2.8 -1.6 -3.4 0.2 -3.4C2 -3.4 3.8 -2.8 5 -1.1C4.2 1.9 2 3.1 0 3.1C-2 3.1 -4.2 1.9 -5 -0.9Z" fill="#fff"/><circle cx="0.2" cy="-1.1" r="2.95" fill="#000"/><circle cx="-1" cy="-1.8" r="0.65" fill="#fff" fill-opacity="0.75"/></g></svg>
<svg style="position:absolute;left:1089px;top:164px;" width="48" height="23" viewBox="0 0 48 23"><g transform="translate(24.2 11.2)"><path d="M-7.5 0.3C-5.6 -4.2 -2.4 -6 0.2 -6C3.4 -6 6 -3.8 7.4 -0.2C5.8 3.4 3 4.9 -0.2 4.9C-3.4 4.9 -5.8 3.6 -7.5 0.3Z" fill="#9c9c9c"/><path d="M-1.4 4.6l-0.4 1.1M0.4 4.8l0 1M-3.2 4l-0.7 0.9M2.4 4.3l0.5 0.9M-6.6 1.6l-1 0.4" stroke="#9c9c9c" stroke-width="0.6"/><path d="M-5 -0.9C-3.4 -2.8 -1.6 -3.4 0.2 -3.4C2 -3.4 3.8 -2.8 5 -1.1C4.2 1.9 2 3.1 0 3.1C-2 3.1 -4.2 1.9 -5 -0.9Z" fill="#f0f0f0"/><circle cx="0.2" cy="-1.1" r="2.95" fill="#9c9c9c"/><circle cx="-1" cy="-1.8" r="0.65" fill="#f0f0f0" fill-opacity="0.75"/></g></svg>
<svg style="position:absolute;left:1138px;top:164px;" width="48" height="23" viewBox="0 0 48 23"><path d="M24.2 5.6V17.2M18.4 11.4H30" stroke="#7a0000" stroke-width="3.4" fill="none"/><path d="M24.2 6.1V16.7M18.9 11.4H29.5" stroke="#ff0000" stroke-width="2.4" fill="none"/></svg>
<svg style="position:absolute;left:1187px;top:164px;" width="48" height="23" viewBox="0 0 48 23"><rect x="18" y="9" width="12" height="3.8" rx="0.8" fill="#ff0000" stroke="#7a0000" stroke-width="0.8"/></svg>
<svg style="position:absolute;left:1236px;top:164px;" width="48" height="23" viewBox="0 0 48 23"><g transform="translate(17.2 17.6) rotate(-44)"><path d="M0 0L3.2 -1.6H16.5V1.6H3.2Z" fill="#e0a030" stroke="#8a5a10" stroke-width="0.5"/><path d="M16.5 -1.6H19.3a1 1 0 0 1 1 1V0.6a1 1 0 0 1 -1 1H16.5Z" fill="#e02020"/><path d="M0 0L1.3 -0.65V0.65Z" fill="#333"/></g></svg>
<div style="position:absolute;left:1040px;top:187px;width:245px;height:392px;background:#fff;border:1px solid #aaa6a1;box-sizing:border-box;"></div>
<div style="position:absolute;left:1041px;top:239px;width:243px;height:17px;background:#308cc6;"></div>
<span class="t" style="left:1081.80px;top:190.27px;font-size:13.5px;line-height:13.5px;color:#111;">0</span>
<span class="t" style="left:1081.80px;top:207.27px;font-size:13.5px;line-height:13.5px;color:#111;transform:scaleX(0.9058);transform-origin:0 0;">3h</span>
<span class="t" style="left:1081.80px;top:224.27px;font-size:13.5px;line-height:13.5px;color:#111;transform:scaleX(0.9821);transform-origin:0 0;">3h-tratt</span>
<span class="t" style="left:1081.80px;top:241.27px;font-size:13.5px;line-height:13.5px;color:#fff;transform:scaleX(0.9591);transform-origin:0 0;">hb</span>
<span class="t" style="left:1081.80px;top:258.27px;font-size:13.5px;line-height:13.5px;color:#111;letter-spacing:-0.020px;">hb-tratt</span>
<span class="t" style="left:1081.80px;top:275.27px;font-size:13.5px;line-height:13.5px;color:#111;transform:scaleX(0.9651);transform-origin:0 0;">quote</span>
<svg style="position:absolute;left:0px;top:0px;" width="1336" height="955" viewBox="0 0 1336 955"><g transform="translate(1051.6 196.4)"><path d="M-7.5 0.3C-5.6 -4.2 -2.4 -6 0.2 -6C3.4 -6 6 -3.8 7.4 -0.2C5.8 3.4 3 4.9 -0.2 4.9C-3.4 4.9 -5.8 3.6 -7.5 0.3Z" fill="#000"/><path d="M-1.4 4.6l-0.4 1.1M0.4 4.8l0 1M-3.2 4l-0.7 0.9M2.4 4.3l0.5 0.9M-6.6 1.6l-1 0.4" stroke="#000" stroke-width="0.6"/><path d="M-5 -0.9C-3.4 -2.8 -1.6 -3.4 0.2 -3.4C2 -3.4 3.8 -2.8 5 -1.1C4.2 1.9 2 3.1 0 3.1C-2 3.1 -4.2 1.9 -5 -0.9Z" fill="#fff"/><circle cx="0.2" cy="-1.1" r="2.95" fill="#000"/><circle cx="-1" cy="-1.8" r="0.65" fill="#fff" fill-opacity="0.75"/></g><path d="M1065.7 196v-2.6a3.2 3.6 0 0 1 6.4 0v2.6" fill="none" stroke="#9c9c9c" stroke-width="1.1"/><rect x="1064.1" y="195.6" width="9.6" height="7.1" fill="#9c9c9c"/><g transform="translate(1051.6 213.4)"><path d="M-7.5 0.3C-5.6 -4.2 -2.4 -6 0.2 -6C3.4 -6 6 -3.8 7.4 -0.2C5.8 3.4 3 4.9 -0.2 4.9C-3.4 4.9 -5.8 3.6 -7.5 0.3Z" fill="#a2a2a2"/><path d="M-1.4 4.6l-0.4 1.1M0.4 4.8l0 1M-3.2 4l-0.7 0.9M2.4 4.3l0.5 0.9M-6.6 1.6l-1 0.4" stroke="#a2a2a2" stroke-width="0.6"/><path d="M-5 -0.9C-3.4 -2.8 -1.6 -3.4 0.2 -3.4C2 -3.4 3.8 -2.8 5 -1.1C4.2 1.9 2 3.1 0 3.1C-2 3.1 -4.2 1.9 -5 -0.9Z" fill="#f4f4f4"/><circle cx="0.2" cy="-1.1" r="2.95" fill="#a2a2a2"/><circle cx="-1" cy="-1.8" r="0.65" fill="#f4f4f4" fill-opacity="0.75"/></g><path d="M1065.7 213v-2.6a3.2 3.6 0 0 1 6.4 0v2.6" fill="none" stroke="#9c9c9c" stroke-width="1.1"/><rect x="1064.1" y="212.6" width="9.6" height="7.1" fill="#9c9c9c"/><g transform="translate(1051.6 230.4)"><path d="M-7.5 0.3C-5.6 -4.2 -2.4 -6 0.2 -6C3.4 -6 6 -3.8 7.4 -0.2C5.8 3.4 3 4.9 -0.2 4.9C-3.4 4.9 -5.8 3.6 -7.5 0.3Z" fill="#a2a2a2"/><path d="M-1.4 4.6l-0.4 1.1M0.4 4.8l0 1M-3.2 4l-0.7 0.9M2.4 4.3l0.5 0.9M-6.6 1.6l-1 0.4" stroke="#a2a2a2" stroke-width="0.6"/><path d="M-5 -0.9C-3.4 -2.8 -1.6 -3.4 0.2 -3.4C2 -3.4 3.8 -2.8 5 -1.1C4.2 1.9 2 3.1 0 3.1C-2 3.1 -4.2 1.9 -5 -0.9Z" fill="#f4f4f4"/><circle cx="0.2" cy="-1.1" r="2.95" fill="#a2a2a2"/><circle cx="-1" cy="-1.8" r="0.65" fill="#f4f4f4" fill-opacity="0.75"/></g><path d="M1065.7 230v-2.6a3.2 3.6 0 0 1 6.4 0v2.6" fill="none" stroke="#9c9c9c" stroke-width="1.1"/><rect x="1064.1" y="229.6" width="9.6" height="7.1" fill="#9c9c9c"/><g transform="translate(1051.6 247.4)"><path d="M-7.5 0.3C-5.6 -4.2 -2.4 -6 0.2 -6C3.4 -6 6 -3.8 7.4 -0.2C5.8 3.4 3 4.9 -0.2 4.9C-3.4 4.9 -5.8 3.6 -7.5 0.3Z" fill="#0b3a5c"/><path d="M-1.4 4.6l-0.4 1.1M0.4 4.8l0 1M-3.2 4l-0.7 0.9M2.4 4.3l0.5 0.9M-6.6 1.6l-1 0.4" stroke="#0b3a5c" stroke-width="0.6"/><path d="M-5 -0.9C-3.4 -2.8 -1.6 -3.4 0.2 -3.4C2 -3.4 3.8 -2.8 5 -1.1C4.2 1.9 2 3.1 0 3.1C-2 3.1 -4.2 1.9 -5 -0.9Z" fill="#308cc6"/><circle cx="0.2" cy="-1.1" r="2.95" fill="#0b3a5c"/><circle cx="-1" cy="-1.8" r="0.65" fill="#308cc6" fill-opacity="0.75"/></g><path d="M1065.7 247v-2.6a3.2 3.6 0 0 1 6.4 0v2.6" fill="none" stroke="#7d9db6" stroke-width="1.1"/><rect x="1064.1" y="246.6" width="9.6" height="7.1" fill="#7d9db6"/><g transform="translate(1051.6 264.4)"><path d="M-7.5 0.3C-5.6 -4.2 -2.4 -6 0.2 -6C3.4 -6 6 -3.8 7.4 -0.2C5.8 3.4 3 4.9 -0.2 4.9C-3.4 4.9 -5.8 3.6 -7.5 0.3Z" fill="#000"/><path d="M-1.4 4.6l-0.4 1.1M0.4 4.8l0 1M-3.2 4l-0.7 0.9M2.4 4.3l0.5 0.9M-6.6 1.6l-1 0.4" stroke="#000" stroke-width="0.6"/><path d="M-5 -0.9C-3.4 -2.8 -1.6 -3.4 0.2 -3.4C2 -3.4 3.8 -2.8 5 -1.1C4.2 1.9 2 3.1 0 3.1C-2 3.1 -4.2 1.9 -5 -0.9Z" fill="#fff"/><circle cx="0.2" cy="-1.1" r="2.95" fill="#000"/><circle cx="-1" cy="-1.8" r="0.65" fill="#fff" fill-opacity="0.75"/></g><path d="M1065.7 264v-2.6a3.2 3.6 0 0 1 6.4 0v2.6" fill="none" stroke="#9c9c9c" stroke-width="1.1"/><rect x="1064.1" y="263.6" width="9.6" height="7.1" fill="#9c9c9c"/><g transform="translate(1051.6 281.4)"><path d="M-7.5 0.3C-5.6 -4.2 -2.4 -6 0.2 -6C3.4 -6 6 -3.8 7.4 -0.2C5.8 3.4 3 4.9 -0.2 4.9C-3.4 4.9 -5.8 3.6 -7.5 0.3Z" fill="#000"/><path d="M-1.4 4.6l-0.4 1.1M0.4 4.8l0 1M-3.2 4l-0.7 0.9M2.4 4.3l0.5 0.9M-6.6 1.6l-1 0.4" stroke="#000" stroke-width="0.6"/><path d="M-5 -0.9C-3.4 -2.8 -1.6 -3.4 0.2 -3.4C2 -3.4 3.8 -2.8 5 -1.1C4.2 1.9 2 3.1 0 3.1C-2 3.1 -4.2 1.9 -5 -0.9Z" fill="#fff"/><circle cx="0.2" cy="-1.1" r="2.95" fill="#000"/><circle cx="-1" cy="-1.8" r="0.65" fill="#fff" fill-opacity="0.75"/></g><path d="M1065.7 281v-2.6a3.2 3.6 0 0 1 6.4 0v2.6" fill="none" stroke="#9c9c9c" stroke-width="1.1"/><rect x="1064.1" y="280.6" width="9.6" height="7.1" fill="#9c9c9c"/></svg>
<div style="position:absolute;left:1285px;top:145px;width:1px;height:748px;background:#c6c2bd;"></div>
<svg style="position:absolute;left:1157px;top:581px;" width="16" height="3" viewBox="0 0 16 3"><path d="M0.5 1.5h1m1.5 0h1m1.5 0h1m1.5 0h1m1.5 0h1m1.5 0h1" stroke="#aaa6a0" stroke-width="1" fill="none"/></svg>
<span class="t" style="left:1044.20px;top:589.37px;font-size:13.5px;line-height:13.5px;color:#111;transform:scaleX(0.9397);transform-origin:0 0;">Property Editor</span>
<svg style="position:absolute;left:1258px;top:590px;" width="11" height="11" viewBox="0 0 11 11"><rect x="0.5" y="0.5" width="10" height="10" rx="2" fill="#f4f2ee" stroke="#6b6b6b" stroke-width="1"/><rect x="4.5" y="2.5" width="4" height="4" rx="0.8" fill="none" stroke="#555" stroke-width="1"/><rect x="2.5" y="4.5" width="4" height="4" rx="0.8" fill="#f4f2ee" stroke="#555" stroke-width="1"/></svg>
<svg style="position:absolute;left:1272px;top:590px;" width="11" height="11" viewBox="0 0 11 11"><rect x="0.5" y="0.5" width="10" height="10" rx="2" fill="#f4f2ee" stroke="#6b6b6b" stroke-width="1"/><path d="M3 3L8 8M8 3L3 8" stroke="#555" stroke-width="1.8" fill="none"/></svg>
<div style="position:absolute;left:1040px;top:605px;width:245px;height:288px;border:1px solid #aaa6a1;box-sizing:border-box;background:#efebe7;"></div>
<span class="t" style="left:1051.00px;top:621.17px;font-size:13.5px;line-height:13.5px;color:#111;transform:scaleX(0.9109);transform-origin:0 0;">Selection:</span>
<div style="position:absolute;left:1111px;top:616px;width:164px;height:24px;background:linear-gradient(#ffffff,#f6f4f1 50%,#ebe8e4);border:1px solid #b7b3ae;border-radius:3px;box-sizing:border-box;"></div>
<span class="t" style="left:1116.20px;top:621.17px;font-size:13.5px;line-height:13.5px;color:#111;transform:scaleX(0.9119);transform-origin:0 0;">No Selection</span>
<svg style="position:absolute;left:1258px;top:624px;" width="10" height="8" viewBox="0 0 10 8"><path d="M1.5 1.8h8l-4 4.6z" fill="#333"/></svg>
<span class="t" style="left:1050.60px;top:648.87px;font-size:13.5px;line-height:13.5px;color:#b9b5b0;transform:scaleX(0.9250);transform-origin:0 0;">General Properties</span>
<div style="position:absolute;left:1051px;top:667px;width:224px;height:204px;border:1px solid #d3cfca;box-sizing:border-box;"></div>
<span class="t" style="left:1116.50px;top:680.97px;font-size:13.5px;line-height:13.5px;color:#b9b5b0;transform:scaleX(0.7863);transform-origin:0 0;">Layer:</span>
<div style="position:absolute;left:1152px;top:675px;width:111px;height:25px;background:linear-gradient(#f7f5f2,#edeae6);border:1px solid #c9c5c0;border-radius:3px;box-sizing:border-box;"></div>
<svg style="position:absolute;left:1247px;top:684px;" width="10" height="8" viewBox="0 0 10 8"><path d="M1.5 1.8h7l-3.5 4z" fill="#d0ccc7"/></svg>
<span class="t" style="left:1115.20px;top:707.97px;font-size:13.5px;line-height:13.5px;color:#b9b5b0;transform:scaleX(0.8553);transform-origin:0 0;">Color:</span>
<div style="position:absolute;left:1152px;top:702px;width:111px;height:25px;background:linear-gradient(#f7f5f2,#edeae6);border:1px solid #c9c5c0;border-radius:3px;box-sizing:border-box;"></div>
<svg style="position:absolute;left:1247px;top:711px;" width="10" height="8" viewBox="0 0 10 8"><path d="M1.5 1.8h7l-3.5 4z" fill="#d0ccc7"/></svg>
<div style="position:absolute;left:1158px;top:710px;width:16px;height:10px;border:1px solid #8a8a8a;background:#f4f2ee;box-sizing:border-box;"></div>
<span class="t" style="left:1177.20px;top:707.97px;font-size:13.5px;line-height:13.5px;color:#b9b5b0;transform:scaleX(0.8823);transform-origin:0 0;">By Layer</span>
<span class="t" style="left:1081.40px;top:734.97px;font-size:13.5px;line-height:13.5px;color:#b9b5b0;transform:scaleX(0.9459);transform-origin:0 0;">Lineweight:</span>
<div style="position:absolute;left:1152px;top:729px;width:111px;height:25px;background:linear-gradient(#f7f5f2,#edeae6);border:1px solid #c9c5c0;border-radius:3px;box-sizing:border-box;"></div>
<svg style="position:absolute;left:1247px;top:738px;" width="10" height="8" viewBox="0 0 10 8"><path d="M1.5 1.8h7l-3.5 4z" fill="#d0ccc7"/></svg>
<div style="position:absolute;left:1158px;top:742px;width:16px;height:1px;background:#8a8a8a;"></div>
<span class="t" style="left:1177.20px;top:734.97px;font-size:13.5px;line-height:13.5px;color:#b9b5b0;transform:scaleX(0.8823);transform-origin:0 0;">By Layer</span>
<span class="t" style="left:1095.40px;top:761.97px;font-size:13.5px;line-height:13.5px;color:#b9b5b0;transform:scaleX(0.9236);transform-origin:0 0;">Linetype:</span>
<div style="position:absolute;left:1152px;top:756px;width:111px;height:25px;background:linear-gradient(#f7f5f2,#edeae6);border:1px solid #c9c5c0;border-radius:3px;box-sizing:border-box;"></div>
<svg style="position:absolute;left:1247px;top:765px;" width="10" height="8" viewBox="0 0 10 8"><path d="M1.5 1.8h7l-3.5 4z" fill="#d0ccc7"/></svg>
<span class="t" style="left:1157.20px;top:761.97px;font-size:13.5px;line-height:13.5px;color:#b9b5b0;transform:scaleX(0.8823);transform-origin:0 0;">By Layer</span>
<span class="t" style="left:1062.40px;top:788.97px;font-size:13.5px;line-height:13.5px;color:#b9b5b0;transform:scaleX(0.9057);transform-origin:0 0;">Linetype Scale:</span>
<div style="position:absolute;left:1152px;top:783px;width:111px;height:25px;background:#efebe7;border:1px solid #b3afaa;border-radius:3px;box-sizing:border-box;"></div>
<span class="t" style="left:1077.40px;top:815.97px;font-size:13.5px;line-height:13.5px;color:#b9b5b0;transform:scaleX(0.9332);transform-origin:0 0;">Draw Order:</span>
<div style="position:absolute;left:1152px;top:810px;width:111px;height:25px;background:#efebe7;border:1px solid #b3afaa;border-radius:3px;box-sizing:border-box;"></div>
<span class="t" style="left:1103.20px;top:842.97px;font-size:13.5px;line-height:13.5px;color:#b9b5b0;transform:scaleX(0.9199);transform-origin:0 0;">Handle:</span>
<div style="position:absolute;left:1152px;top:837px;width:111px;height:25px;background:#efebe7;border:1px solid #b3afaa;border-radius:3px;box-sizing:border-box;"></div>
<div style="position:absolute;left:1286px;top:145px;width:36px;height:748px;background:linear-gradient(90deg,#f2efea,#f6f3ef 50%,#f2efea);"></div>
<svg style="position:absolute;left:1297px;top:150px;" width="16" height="4" viewBox="0 0 16 4"><path d="M0.5 0.5h1m1.5 0h1m1.5 0h1m1.5 0h1m1.5 0h1m1.5 0h1m1.5 0h1M0.5 3.5h1m1.5 0h1m1.5 0h1m1.5 0h1m1.5 0h1m1.5 0h1m1.5 0h1" stroke="#c8c4be" stroke-width="1" fill="none"/></svg>
<div style="position:absolute;left:1289px;top:158px;width:29px;height:29px;border:1px solid #6e6e6e;box-sizing:border-box;background:linear-gradient(#8c8c8c,#b9b9b9 35%,#e2e2e2);box-shadow:inset 0 0 3px #777;"></div>
<svg style="position:absolute;left:1292px;top:161px;" width="22" height="22" viewBox="0 0 22 22"><rect x="0.5" y="0.5" width="21" height="21" rx="1.5" fill="#fff" stroke="#b4b4b4" stroke-width="1"/><rect x="0" y="0" width="22" height="3.6" fill="#000"/><rect x="1" y="0.6" width="2.6" height="2.4" fill="#fff"/><path d="M6 9.5L10 7.5V17L6 19Z M8 8.8L12 6.8V16.3L8 18.3Z" fill="#b8b8b8" stroke="#777" stroke-width="0.6"/><path d="M10 8L15 5.8V15.2L10 17.4Z" fill="#f7c8c8" stroke="#888" stroke-width="0.6"/><path d="M11 16L14.5 8.5V14.6Z" fill="#e88"/></svg>
<svg style="position:absolute;left:1292px;top:191px;" width="22" height="22" viewBox="0 0 22 22"><rect x="0.5" y="0.5" width="21" height="21" rx="1.5" fill="#fff" stroke="#b4b4b4" stroke-width="1"/><rect x="0" y="0" width="22" height="3.6" fill="#000"/><rect x="1" y="0.6" width="2.6" height="2.4" fill="#fff"/><rect x="6.5" y="8" width="7" height="6" fill="#f3e7b0" stroke="#a9a07a" stroke-width="0.8"/><circle cx="13" cy="14" r="3.2" fill="#f3e7b0" fill-opacity="0.8" stroke="#a9a07a" stroke-width="0.8"/></svg>
<div style="position:absolute;left:1295px;top:221px;width:17px;height:1px;background:#dcd8d3;"></div>
<div style="position:absolute;left:1289px;top:225px;width:29px;height:29px;border:1px solid #6e6e6e;box-sizing:border-box;background:linear-gradient(#8c8c8c,#b9b9b9 35%,#e2e2e2);box-shadow:inset 0 0 3px #777;"></div>
<svg style="position:absolute;left:1292px;top:228px;" width="22" height="22" viewBox="0 0 22 22"><rect x="0.5" y="0.5" width="21" height="21" rx="1.5" fill="#fff" stroke="#b4b4b4" stroke-width="1"/><rect x="0" y="0" width="22" height="3.6" fill="#000"/><rect x="1" y="0.6" width="2.6" height="2.4" fill="#fff"/><rect x="3" y="6.8" width="3.4" height="2.6" fill="#000"/><rect x="8.5" y="6.7" width="10" height="2.8" fill="#dcdcdc" stroke="#bbb" stroke-width="0.6"/><rect x="3" y="11.4" width="3.4" height="2.6" fill="#000"/><rect x="8.5" y="11.3" width="10" height="2.8" fill="#fff" stroke="#222" stroke-width="0.6"/><rect x="3" y="16" width="3.4" height="2.6" fill="#000"/><rect x="8.5" y="15.9" width="10" height="2.8" fill="#dcdcdc" stroke="#bbb" stroke-width="0.6"/></svg>
<div style="position:absolute;left:1295px;top:258px;width:17px;height:1px;background:#dcd8d3;"></div>
<div style="position:absolute;left:1289px;top:262px;width:29px;height:29px;border:1px solid #6e6e6e;box-sizing:border-box;background:linear-gradient(#8c8c8c,#b9b9b9 35%,#e2e2e2);box-shadow:inset 0 0 3px #777;"></div>
<svg style="position:absolute;left:1292px;top:265px;" width="22" height="22" viewBox="0 0 22 22"><rect x="0.5" y="0.5" width="21" height="21" rx="1.5" fill="#fff" stroke="#b4b4b4" stroke-width="1"/><rect x="0" y="0" width="22" height="3.6" fill="#000"/><rect x="1" y="0.6" width="2.6" height="2.4" fill="#fff"/><path d="M2 7.5h8M2 10h7.5M2 12.5h9.5M2 15h12" stroke="#aab" stroke-width="0.8"/><rect x="0.5" y="17.2" width="21" height="4.3" fill="#eee" stroke="#999" stroke-width="0.6"/><path d="M7 19.6h11" stroke="#666" stroke-width="1.2"/></svg>
<svg style="position:absolute;left:0px;top:0px;" width="0" height="0" viewBox="0 0 0 0"><defs>
<linearGradient id="gl" x1="0" y1="0" x2="0" y2="1"><stop offset="0" stop-color="#669fe4"/><stop offset="0.5" stop-color="#7db3ee"/><stop offset="1" stop-color="#a4ccf6"/></linearGradient>
<linearGradient id="gg" x1="0" y1="0" x2="0" y2="1"><stop offset="0" stop-color="#bcbcbc"/><stop offset="1" stop-color="#dadada"/></linearGradient>
<linearGradient id="gpress" x1="0" y1="0" x2="0" y2="1"><stop offset="0" stop-color="#8a8a8a"/><stop offset="0.4" stop-color="#b4b4b4"/><stop offset="1" stop-color="#dedede"/></linearGradient>
<linearGradient id="gpage" x1="0" y1="0" x2="1" y2="1"><stop offset="0" stop-color="#ffffff"/><stop offset="1" stop-color="#e6e6e6"/></linearGradient>
<radialGradient id="gsun"><stop offset="0" stop-color="#fffde0"/><stop offset="0.25" stop-color="#f6ee50"/><stop offset="0.75" stop-color="#ece420"/><stop offset="1" stop-color="#ece420" stop-opacity="0"/></radialGradient>
<linearGradient id="gfold" x1="0" y1="0" x2="0" y2="1"><stop offset="0" stop-color="#88afdc"/><stop offset="1" stop-color="#5a8cc8"/></linearGradient>
<linearGradient id="ggreen" x1="0" y1="0" x2="1" y2="1"><stop offset="0" stop-color="#7fd070"/><stop offset="1" stop-color="#1f9040"/></linearGradient>
<linearGradient id="ggray" x1="0" y1="0" x2="1" y2="1"><stop offset="0" stop-color="#cbc9c7"/><stop offset="1" stop-color="#a3a3a3"/></linearGradient>
<linearGradient id="gfl" x1="0" y1="0" x2="0" y2="1"><stop offset="0" stop-color="#69a0ff"/><stop offset="1" stop-color="#3f86ff"/></linearGradient>
</defs></svg>
<svg style="position:absolute;left:19px;top:81px;shape-rendering:crispEdges;" width="5" height="17" viewBox="0 0 5 17"><rect x="1" y="1" width="1" height="1" fill="#fff"/><rect x="0" y="0" width="1" height="1" fill="#b4b0ab"/><rect x="1" y="4" width="1" height="1" fill="#fff"/><rect x="0" y="3" width="1" height="1" fill="#b4b0ab"/><rect x="1" y="7" width="1" height="1" fill="#fff"/><rect x="0" y="6" width="1" height="1" fill="#b4b0ab"/><rect x="1" y="10" width="1" height="1" fill="#fff"/><rect x="0" y="9" width="1" height="1" fill="#b4b0ab"/><rect x="1" y="13" width="1" height="1" fill="#fff"/><rect x="0" y="12" width="1" height="1" fill="#b4b0ab"/><rect x="1" y="16" width="1" height="1" fill="#fff"/><rect x="0" y="15" width="1" height="1" fill="#b4b0ab"/><rect x="4" y="1" width="1" height="1" fill="#fff"/><rect x="3" y="0" width="1" height="1" fill="#b4b0ab"/><rect x="4" y="4" width="1" height="1" fill="#fff"/><rect x="3" y="3" width="1" height="1" fill="#b4b0ab"/><rect x="4" y="7" width="1" height="1" fill="#fff"/><rect x="3" y="6" width="1" height="1" fill="#b4b0ab"/><rect x="4" y="10" width="1" height="1" fill="#fff"/><rect x="3" y="9" width="1" height="1" fill="#b4b0ab"/><rect x="4" y="13" width="1" height="1" fill="#fff"/><rect x="3" y="12" width="1" height="1" fill="#b4b0ab"/><rect x="4" y="16" width="1" height="1" fill="#fff"/><rect x="3" y="15" width="1" height="1" fill="#b4b0ab"/></svg>
<svg style="position:absolute;left:78px;top:81px;shape-rendering:crispEdges;" width="5" height="17" viewBox="0 0 5 17"><rect x="1" y="1" width="1" height="1" fill="#fff"/><rect x="0" y="0" width="1" height="1" fill="#b4b0ab"/><rect x="1" y="4" width="1" height="1" fill="#fff"/><rect x="0" y="3" width="1" height="1" fill="#b4b0ab"/><rect x="1" y="7" width="1" height="1" fill="#fff"/><rect x="0" y="6" width="1" height="1" fill="#b4b0ab"/><rect x="1" y="10" width="1" height="1" fill="#fff"/><rect x="0" y="9" width="1" height="1" fill="#b4b0ab"/><rect x="1" y="13" width="1" height="1" fill="#fff"/><rect x="0" y="12" width="1" height="1" fill="#b4b0ab"/><rect x="1" y="16" width="1" height="1" fill="#fff"/><rect x="0" y="15" width="1" height="1" fill="#b4b0ab"/><rect x="4" y="1" width="1" height="1" fill="#fff"/><rect x="3" y="0" width="1" height="1" fill="#b4b0ab"/><rect x="4" y="4" width="1" height="1" fill="#fff"/><rect x="3" y="3" width="1" height="1" fill="#b4b0ab"/><rect x="4" y="7" width="1" height="1" fill="#fff"/><rect x="3" y="6" width="1" height="1" fill="#b4b0ab"/><rect x="4" y="10" width="1" height="1" fill="#fff"/><rect x="3" y="9" width="1" height="1" fill="#b4b0ab"/><rect x="4" y="13" width="1" height="1" fill="#fff"/><rect x="3" y="12" width="1" height="1" fill="#b4b0ab"/><rect x="4" y="16" width="1" height="1" fill="#fff"/><rect x="3" y="15" width="1" height="1" fill="#b4b0ab"/></svg>
<svg style="position:absolute;left:258px;top:81px;shape-rendering:crispEdges;" width="5" height="17" viewBox="0 0 5 17"><rect x="1" y="1" width="1" height="1" fill="#fff"/><rect x="0" y="0" width="1" height="1" fill="#b4b0ab"/><rect x="1" y="4" width="1" height="1" fill="#fff"/><rect x="0" y="3" width="1" height="1" fill="#b4b0ab"/><rect x="1" y="7" width="1" height="1" fill="#fff"/><rect x="0" y="6" width="1" height="1" fill="#b4b0ab"/><rect x="1" y="10" width="1" height="1" fill="#fff"/><rect x="0" y="9" width="1" height="1" fill="#b4b0ab"/><rect x="1" y="13" width="1" height="1" fill="#fff"/><rect x="0" y="12" width="1" height="1" fill="#b4b0ab"/><rect x="1" y="16" width="1" height="1" fill="#fff"/><rect x="0" y="15" width="1" height="1" fill="#b4b0ab"/><rect x="4" y="1" width="1" height="1" fill="#fff"/><rect x="3" y="0" width="1" height="1" fill="#b4b0ab"/><rect x="4" y="4" width="1" height="1" fill="#fff"/><rect x="3" y="3" width="1" height="1" fill="#b4b0ab"/><rect x="4" y="7" width="1" height="1" fill="#fff"/><rect x="3" y="6" width="1" height="1" fill="#b4b0ab"/><rect x="4" y="10" width="1" height="1" fill="#fff"/><rect x="3" y="9" width="1" height="1" fill="#b4b0ab"/><rect x="4" y="13" width="1" height="1" fill="#fff"/><rect x="3" y="12" width="1" height="1" fill="#b4b0ab"/><rect x="4" y="16" width="1" height="1" fill="#fff"/><rect x="3" y="15" width="1" height="1" fill="#b4b0ab"/></svg>
<svg style="position:absolute;left:468px;top:81px;shape-rendering:crispEdges;" width="5" height="17" viewBox="0 0 5 17"><rect x="1" y="1" width="1" height="1" fill="#fff"/><rect x="0" y="0" width="1" height="1" fill="#b4b0ab"/><rect x="1" y="4" width="1" height="1" fill="#fff"/><rect x="0" y="3" width="1" height="1" fill="#b4b0ab"/><rect x="1" y="7" width="1" height="1" fill="#fff"/><rect x="0" y="6" width="1" height="1" fill="#b4b0ab"/><rect x="1" y="10" width="1" height="1" fill="#fff"/><rect x="0" y="9" width="1" height="1" fill="#b4b0ab"/><rect x="1" y="13" width="1" height="1" fill="#fff"/><rect x="0" y="12" width="1" height="1" fill="#b4b0ab"/><rect x="1" y="16" width="1" height="1" fill="#fff"/><rect x="0" y="15" width="1" height="1" fill="#b4b0ab"/><rect x="4" y="1" width="1" height="1" fill="#fff"/><rect x="3" y="0" width="1" height="1" fill="#b4b0ab"/><rect x="4" y="4" width="1" height="1" fill="#fff"/><rect x="3" y="3" width="1" height="1" fill="#b4b0ab"/><rect x="4" y="7" width="1" height="1" fill="#fff"/><rect x="3" y="6" width="1" height="1" fill="#b4b0ab"/><rect x="4" y="10" width="1" height="1" fill="#fff"/><rect x="3" y="9" width="1" height="1" fill="#b4b0ab"/><rect x="4" y="13" width="1" height="1" fill="#fff"/><rect x="3" y="12" width="1" height="1" fill="#b4b0ab"/><rect x="4" y="16" width="1" height="1" fill="#fff"/><rect x="3" y="15" width="1" height="1" fill="#b4b0ab"/></svg>
<svg style="position:absolute;left:19px;top:118px;shape-rendering:crispEdges;" width="5" height="17" viewBox="0 0 5 17"><rect x="1" y="1" width="1" height="1" fill="#fff"/><rect x="0" y="0" width="1" height="1" fill="#b4b0ab"/><rect x="1" y="4" width="1" height="1" fill="#fff"/><rect x="0" y="3" width="1" height="1" fill="#b4b0ab"/><rect x="1" y="7" width="1" height="1" fill="#fff"/><rect x="0" y="6" width="1" height="1" fill="#b4b0ab"/><rect x="1" y="10" width="1" height="1" fill="#fff"/><rect x="0" y="9" width="1" height="1" fill="#b4b0ab"/><rect x="1" y="13" width="1" height="1" fill="#fff"/><rect x="0" y="12" width="1" height="1" fill="#b4b0ab"/><rect x="1" y="16" width="1" height="1" fill="#fff"/><rect x="0" y="15" width="1" height="1" fill="#b4b0ab"/><rect x="4" y="1" width="1" height="1" fill="#fff"/><rect x="3" y="0" width="1" height="1" fill="#b4b0ab"/><rect x="4" y="4" width="1" height="1" fill="#fff"/><rect x="3" y="3" width="1" height="1" fill="#b4b0ab"/><rect x="4" y="7" width="1" height="1" fill="#fff"/><rect x="3" y="6" width="1" height="1" fill="#b4b0ab"/><rect x="4" y="10" width="1" height="1" fill="#fff"/><rect x="3" y="9" width="1" height="1" fill="#b4b0ab"/><rect x="4" y="13" width="1" height="1" fill="#fff"/><rect x="3" y="12" width="1" height="1" fill="#b4b0ab"/><rect x="4" y="16" width="1" height="1" fill="#fff"/><rect x="3" y="15" width="1" height="1" fill="#b4b0ab"/></svg>
<svg style="position:absolute;left:0px;top:0px;" width="1336" height="955" viewBox="0 0 1336 955"><path d="M36.6 81.3V93.6L39.4 91.2L42 96.6L44.6 95.4L42 90.2L45.6 89.9Z" fill="#fdfdfd" stroke="#7e7e7e" stroke-width="1" stroke-linejoin="round"/></svg>
<svg style="position:absolute;left:90px;top:77px;" width="20" height="23" viewBox="0 0 20 23"><rect x="0.5" y="1.5" width="18" height="20.5" rx="1" fill="url(#gpage)" stroke="#c2c2c2"/><path d="M0.8 22.5h17.4" stroke="#a8a8a8" stroke-width="1"/><circle cx="15.8" cy="5.6" r="5" fill="url(#gsun)"/></svg>
<svg style="position:absolute;left:117px;top:77px;" width="26" height="23" viewBox="0 0 26 23"><path d="M1.5 2.8L10 2.2L11.5 1.2H21.2V19H3Z" fill="#9a9a9a" stroke="#6f6f6f" stroke-width="0.6"/><path d="M5 3.5L20.5 2.2V18H5Z" fill="url(#gpage)" stroke="#aaa" stroke-width="0.5"/><path d="M5.5 11L24.8 9.6L22.2 20.6H3.2Z" fill="url(#gfold)" stroke="#3f6fa8" stroke-width="0.7"/></svg>
<div style="position:absolute;left:149px;top:81px;width:1px;height:17px;background:#cfcbc6;"></div>
<div style="position:absolute;left:150px;top:81px;width:1px;height:17px;background:#fbfaf8;"></div>
<svg style="position:absolute;left:157px;top:78px;" width="20" height="21" viewBox="0 0 20 21"><rect x="0.7" y="1.4" width="18" height="18.8" rx="2.2" fill="url(#gfl)" stroke="#3e3ebc" stroke-width="0.9"/><path d="M1.7 3.4V18.4" stroke="#9cc0ff" stroke-width="0.9"/><rect x="3.7" y="2" width="11.8" height="8.6" fill="#f6f8ff"/><path d="M3.7 10.6L15.5 2V10.6Z" fill="#e4e9fc"/><rect x="4.8" y="12.8" width="9.4" height="7.2" fill="#dcdde6"/><path d="M4.8 12.8h9.4" stroke="#f4f4f8" stroke-width="0.8"/><rect x="6" y="14.4" width="1.7" height="3.2" fill="#2e5fe0"/></svg>
<svg style="position:absolute;left:187px;top:78px;" width="20" height="21" viewBox="0 0 20 21"><rect x="0.7" y="1.4" width="18" height="18.8" rx="2.2" fill="url(#gfl)" stroke="#3e3ebc" stroke-width="0.9"/><path d="M1.7 3.4V18.4" stroke="#9cc0ff" stroke-width="0.9"/><rect x="3.7" y="2" width="11.8" height="8.6" fill="#f6f8ff"/><path d="M3.7 10.6L15.5 2V10.6Z" fill="#e4e9fc"/><rect x="4.8" y="12.8" width="9.4" height="7.2" fill="#dcdde6"/><path d="M4.8 12.8h9.4" stroke="#f4f4f8" stroke-width="0.8"/><rect x="6" y="14.4" width="1.7" height="3.2" fill="#2e5fe0"/></svg>
<svg style="position:absolute;left:187px;top:76px;" width="24" height="24" viewBox="0 0 24 24"><g transform="translate(8.4 16.3) rotate(-46.5)"><path d="M0 0L4 -1.9H15.5V1.9H4Z" fill="#f5a623" stroke="#b06a10" stroke-width="0.5"/><path d="M4 -0.6H15.5" stroke="#ffd27a" stroke-width="1"/><path d="M15.5 -1.9H17.6a1 1 0 0 1 1 1V0.9a1 1 0 0 1 -1 1H15.5Z" fill="#e89090" stroke="#b06a10" stroke-width="0.4"/><path d="M0 0L4 -1.9V1.9Z" fill="#f2d6a8"/><path d="M0 0L1.6 -0.75V0.75Z" fill="#333"/></g></svg>
<div style="position:absolute;left:216px;top:81px;width:1px;height:17px;background:#cfcbc6;"></div>
<div style="position:absolute;left:217px;top:81px;width:1px;height:17px;background:#fbfaf8;"></div>
<svg style="position:absolute;left:222px;top:77px;" width="24" height="22" viewBox="0 0 24 22"><defs><linearGradient id="gpr" x1="0" y1="0" x2="0" y2="1"><stop offset="0" stop-color="#ececec"/><stop offset="0.6" stop-color="#d2d2d2"/><stop offset="1" stop-color="#a8a8a8"/></linearGradient></defs><rect x="10.6" y="1" width="9" height="9" fill="#eeeeee" stroke="#c4c4c4" stroke-width="0.7"/><path d="M1.4 12.4L4.2 9.2H20.4L23 12.4V19.6C23 20.4 22.4 21 21.6 21H2.8C2 21 1.4 20.4 1.4 19.6Z" fill="url(#gpr)" stroke="#b0b0b0" stroke-width="0.6"/><path d="M3.2 14.4h18" stroke="#f8f8f8" stroke-width="1.6"/><path d="M11.8 11.2L17.6 15.4" stroke="#b4b4b4" stroke-width="2.2" stroke-linecap="round"/><path d="M11.8 11.2L17.6 15.4" stroke="#e4e4e4" stroke-width="0.8" stroke-linecap="round"/><circle cx="8.5" cy="8.1" r="4.2" fill="#cfe0f4" stroke="#9ab8dc" stroke-width="1.3"/><circle cx="7.6" cy="7" r="1.7" fill="#f0f6fd"/></svg>
<svg style="position:absolute;left:269px;top:79px;" width="23" height="20" viewBox="0 0 23 20"><path d="M0.2 3.6L3.9 6.9C6 3.5 9.5 0.7 13.3 0.7C18 0.7 21.7 3.5 21.7 7.8C21.7 13.5 16.5 19 9.8 19L9.1 18.2C13.5 17 17.5 13.5 17.5 9.3C17.5 6.8 15.5 5.6 12.8 5.6C10.3 5.6 8.2 7.6 6.6 10.3L9.8 14L0.2 14.3Z" fill="url(#ggreen)" stroke="#2c9040" stroke-width="0.5"/></svg>
<svg style="position:absolute;left:299px;top:79px;" width="23" height="20" viewBox="0 0 23 20"><g transform="translate(21.9 0) scale(-1 1)"><path d="M0.2 3.6L3.9 6.9C6 3.5 9.5 0.7 13.3 0.7C18 0.7 21.7 3.5 21.7 7.8C21.7 13.5 16.5 19 9.8 19L9.1 18.2C13.5 17 17.5 13.5 17.5 9.3C17.5 6.8 15.5 5.6 12.8 5.6C10.3 5.6 8.2 7.6 6.6 10.3L9.8 14L0.2 14.3Z" fill="url(#ggray)" stroke="#a0a0a0" stroke-width="0.5"/></g></svg>
<div style="position:absolute;left:329px;top:81px;width:1px;height:17px;background:#cfcbc6;"></div>
<div style="position:absolute;left:330px;top:81px;width:1px;height:17px;background:#fbfaf8;"></div>
<svg style="position:absolute;left:337px;top:78px;" width="21" height="21" viewBox="0 0 21 21"><g transform="translate(3.6 16.2) rotate(-46)"><rect x="0" y="-3.3" width="19.5" height="6.6" rx="1.8" fill="#b0b0b0" stroke="#9a9a9a" stroke-width="0.6"/><rect x="4" y="-1.8" width="14" height="1.5" fill="#d8d8d8"/><rect x="4" y="0.8" width="14" height="1" fill="#9c9c9c"/><rect x="-0.3" y="-3.3" width="4" height="6.6" fill="#f5f5f5" stroke="#c4c4c4" stroke-width="0.5"/></g><path d="M2.5 20C7 19.2 12 19.6 17 19" stroke="#e2e2e2" stroke-width="1.4" fill="none"/></svg>
<div style="position:absolute;left:366px;top:81px;width:1px;height:17px;background:#cfcbc6;"></div>
<div style="position:absolute;left:367px;top:81px;width:1px;height:17px;background:#fbfaf8;"></div>
<svg style="position:absolute;left:373px;top:77px;" width="23" height="24" viewBox="0 0 23 24"><path d="M8.6 1.6C8.4 0.8 10.6 0.4 11 1.4L12.2 12.6L10.2 14.2Z" fill="#ececec" stroke="#a8a8a8" stroke-width="0.7" stroke-linejoin="round"/><path d="M20.4 4.6C21.2 4.2 22 5.8 21.2 6.4L12.4 14.4L10.8 12.6Z" fill="#ececec" stroke="#a8a8a8" stroke-width="0.7" stroke-linejoin="round"/><ellipse cx="5.4" cy="13" rx="4.1" ry="2.4" transform="rotate(-24 5.4 13)" fill="none" stroke="#a4a4a4" stroke-width="1.5"/><ellipse cx="13.2" cy="18.6" rx="2.4" ry="4.1" transform="rotate(-10 13.2 18.6)" fill="none" stroke="#a4a4a4" stroke-width="1.5"/><path d="M1 21.4h4.4M3.2 19.2v4.4" stroke="#4a4a4a" stroke-width="0.9"/></svg>
<svg style="position:absolute;left:402px;top:77px;" width="24" height="24" viewBox="0 0 24 24"><path d="M1.5 0.8H16.4V17.6H1.5Z" fill="#f8f8f8" stroke="#d4d4d4" stroke-width="0.8"/><path d="M4 4h8M4 6.5h8M4 9h5" stroke="#e4e4e4" stroke-width="0.8"/><path d="M8 4.6H23V20.2L19.6 23.4H8Z" fill="#f4f4f4" stroke="#cfcfcf" stroke-width="0.8"/><rect x="11" y="9.4" width="9.4" height="7.6" fill="#e6e6e6"/><path d="M19.6 23.4V20.2H23Z" fill="#dcdcdc" stroke="#c8c8c8" stroke-width="0.5"/><path d="M2 19.6h4.2M4.1 17.5v4.2" stroke="#666" stroke-width="0.9"/></svg>
<svg style="position:absolute;left:433px;top:76px;" width="22" height="25" viewBox="0 0 22 25"><rect x="1" y="3" width="19.6" height="21" rx="1.6" fill="#b98a45" stroke="#9a6c2a" stroke-width="0.8"/><rect x="3.4" y="5.6" width="14.8" height="16.4" fill="#ececec" stroke="#c9c9c9" stroke-width="0.5"/><rect x="5.4" y="8.4" width="10.6" height="9.4" fill="#dcdcdc"/><path d="M5.4 10.6h10.6M5.4 13h10.6M5.4 15.4h10.6" stroke="#e8e8e8" stroke-width="0.6"/><path d="M13.6 22V18.6L18.2 17.6V22Z" fill="#9c9c9c"/><rect x="6" y="1.2" width="9.6" height="5" rx="1" fill="#a9a99c" stroke="#7e7e72" stroke-width="0.7"/><rect x="7.6" y="0.6" width="6.4" height="1.8" fill="#8e8e84"/></svg>
<svg style="position:absolute;left:480px;top:78px;" width="20" height="22" viewBox="0 0 20 22"><path d="M1.8 19.2H18" stroke="#f04040" stroke-width="1.4"/><g transform="translate(2.6 18) rotate(-44)"><path d="M0 0L4 -2.3H16V2.3H4Z" fill="#d62a1a" stroke="#8a1408" stroke-width="0.5"/><path d="M4 -0.9H16" stroke="#f47060" stroke-width="1"/><path d="M16 -2.3H19a1.2 1.2 0 0 1 1.2 1.2V1.1a1.2 1.2 0 0 1 -1.2 1.2H16Z" fill="#e03828" stroke="#8a1408" stroke-width="0.4"/><path d="M16.6 -2.3V2.3" stroke="#f6b0a8" stroke-width="0.9"/><path d="M0 0L4 -2.3V2.3Z" fill="#e8c49a"/><path d="M0 0L1.8 -1V1Z" fill="#222"/></g></svg>
<svg style="position:absolute;left:509px;top:81px;" width="22" height="17" viewBox="0 0 22 17"><rect x="0" y="0.2" width="22" height="16.6" rx="0.8" fill="#00007e"/><path d="M2.2 13.8L19.2 3.2M19.2 3.2V13.8M2.2 13.8H19.2" stroke="#e8e8ff" stroke-width="0.9" stroke-dasharray="2.2 1.6" fill="none"/></svg>
<svg style="position:absolute;left:538px;top:77px;" width="24" height="24" viewBox="0 0 24 24"><circle cx="12" cy="11.8" r="10" fill="none" stroke="#000" stroke-width="1.35"/><path d="M1.7 22.7L22.8 1.3" stroke="#2222ff" stroke-width="1"/></svg>
<div style="position:absolute;left:569px;top:81px;width:1px;height:17px;background:#cfcbc6;"></div>
<div style="position:absolute;left:570px;top:81px;width:1px;height:17px;background:#fbfaf8;"></div>
<div style="position:absolute;left:573px;top:75px;width:29px;height:29px;border:1px solid #6a6a6a;box-sizing:border-box;background:linear-gradient(#8c8c8c,#b4b4b4 40%,#dedede);"></div>
<svg style="position:absolute;left:573px;top:75px;" width="29" height="29" viewBox="0 0 29 29"><rect x="4.2" y="3.9" width="1.8" height="1.8" fill="#3c3c3c"/><rect x="4.2" y="9.95" width="1.8" height="1.8" fill="#3c3c3c"/><rect x="4.2" y="16" width="1.8" height="1.8" fill="#3c3c3c"/><rect x="4.2" y="22.05" width="1.8" height="1.8" fill="#3c3c3c"/><rect x="10.2" y="3.9" width="1.8" height="1.8" fill="#3c3c3c"/><rect x="10.2" y="9.95" width="1.8" height="1.8" fill="#3c3c3c"/><rect x="10.2" y="16" width="1.8" height="1.8" fill="#3c3c3c"/><rect x="10.2" y="22.05" width="1.8" height="1.8" fill="#3c3c3c"/><rect x="16.2" y="3.9" width="1.8" height="1.8" fill="#3c3c3c"/><rect x="16.2" y="9.95" width="1.8" height="1.8" fill="#3c3c3c"/><rect x="16.2" y="16" width="1.8" height="1.8" fill="#3c3c3c"/><rect x="16.2" y="22.05" width="1.8" height="1.8" fill="#3c3c3c"/><rect x="22.2" y="3.9" width="1.8" height="1.8" fill="#3c3c3c"/><rect x="22.2" y="9.95" width="1.8" height="1.8" fill="#3c3c3c"/><rect x="22.2" y="16" width="1.8" height="1.8" fill="#3c3c3c"/><rect x="22.2" y="22.05" width="1.8" height="1.8" fill="#3c3c3c"/></svg>
<div style="position:absolute;left:606px;top:81px;width:1px;height:17px;background:#cfcbc6;"></div>
<div style="position:absolute;left:607px;top:81px;width:1px;height:17px;background:#fbfaf8;"></div>
<svg style="position:absolute;left:0px;top:0px;" width="1336" height="955" viewBox="0 0 1336 955"><ellipse cx="623.1" cy="98.4" rx="8" ry="1.6" fill="#000" fill-opacity="0.03"/><path d="M628.3 93.2L632.3 97" stroke="#6c6c6c" stroke-width="3.3" stroke-linecap="round"/><path d="M628.9 92.8L632.5 96.2" stroke="#fff" stroke-opacity="0.35" stroke-width="0.9" stroke-linecap="round"/><circle cx="621.1" cy="86.2" r="7.9" fill="url(#gl)" stroke="#d6d8d8" stroke-width="1.8"/><circle cx="621.1" cy="86.2" r="8.9" fill="none" stroke="#b4b7b8" stroke-width="0.5"/><path d="M617 86.2h8.2M621.1 82.1v8.2" stroke="#fff" fill="none" stroke-width="2.3"/><ellipse cx="653.1" cy="98.4" rx="8" ry="1.6" fill="#000" fill-opacity="0.03"/><path d="M658.3 93.2L662.3 97" stroke="#6c6c6c" stroke-width="3.3" stroke-linecap="round"/><path d="M658.9 92.8L662.5 96.2" stroke="#fff" stroke-opacity="0.35" stroke-width="0.9" stroke-linecap="round"/><circle cx="651.1" cy="86.2" r="7.9" fill="url(#gl)" stroke="#d6d8d8" stroke-width="1.8"/><circle cx="651.1" cy="86.2" r="8.9" fill="none" stroke="#b4b7b8" stroke-width="0.5"/><path d="M647 86.2h8.2" stroke="#fff" fill="none" stroke-width="2.3"/><ellipse cx="683.1" cy="98.4" rx="8" ry="1.6" fill="#000" fill-opacity="0.03"/><path d="M688.3 93.2L692.3 97" stroke="#6c6c6c" stroke-width="3.3" stroke-linecap="round"/><path d="M688.9 92.8L692.5 96.2" stroke="#fff" stroke-opacity="0.35" stroke-width="0.9" stroke-linecap="round"/><circle cx="681.1" cy="86.2" r="7.9" fill="url(#gl)" stroke="#d6d8d8" stroke-width="1.8"/><circle cx="681.1" cy="86.2" r="8.9" fill="none" stroke="#b4b7b8" stroke-width="0.5"/><path d="M677.4 84.6v-2h2M684.8 84.6v-2h-2M677.4 87.8v2h2M684.8 87.8v2h-2" stroke="#fff" fill="none" stroke-width="1.6"/><circle cx="681.1" cy="86.2" r="2" fill="#b8d6f8" fill-opacity="0.6"/><ellipse cx="713.3" cy="98.4" rx="8" ry="1.6" fill="#000" fill-opacity="0.03"/><path d="M718.5 93.2L722.5 97" stroke="#b4b4b4" stroke-width="3.3" stroke-linecap="round"/><path d="M719.1 92.8L722.7 96.2" stroke="#fff" stroke-opacity="0.35" stroke-width="0.9" stroke-linecap="round"/><circle cx="711.3" cy="86.2" r="7.9" fill="url(#gg)" stroke="#d6d8d8" stroke-width="1.8"/><circle cx="711.3" cy="86.2" r="8.9" fill="none" stroke="#b4b7b8" stroke-width="0.5"/><path d="M707.6 84.6v-2h2M715 84.6v-2h-2M707.6 87.8v2h2M715 87.8v2h-2" stroke="#9c9c9c" fill="none" stroke-width="2"/><rect x="709.2" y="84.1" width="4.2" height="4.2" fill="#cacaca"/><ellipse cx="743.2" cy="98.4" rx="8" ry="1.6" fill="#000" fill-opacity="0.03"/><path d="M748.4 93.2L752.4 97" stroke="#6c6c6c" stroke-width="3.3" stroke-linecap="round"/><path d="M749 92.8L752.6 96.2" stroke="#fff" stroke-opacity="0.35" stroke-width="0.9" stroke-linecap="round"/><circle cx="741.2" cy="86.2" r="7.9" fill="url(#gl)" stroke="#d6d8d8" stroke-width="1.8"/><circle cx="741.2" cy="86.2" r="8.9" fill="none" stroke="#b4b7b8" stroke-width="0.5"/><path d="M736.6 86.2L741 82.4V84.9H746V87.5H741V90Z" fill="#fff"/><rect x="762.6" y="77.6" width="20" height="12.8" rx="0.8" fill="#fff" stroke="#7fa8e0" stroke-width="0.9"/><ellipse cx="774.4" cy="100.3" rx="8" ry="1.6" fill="#000" fill-opacity="0.03"/><path d="M779.6 95.1L783.6 98.9" stroke="#6c6c6c" stroke-width="3.3" stroke-linecap="round"/><path d="M780.2 94.7L783.8 98.1" stroke="#fff" stroke-opacity="0.35" stroke-width="0.9" stroke-linecap="round"/><circle cx="772.4" cy="88.1" r="6.9" fill="url(#gl)" stroke="#d6d8d8" stroke-width="1.8"/><circle cx="772.4" cy="88.1" r="7.9" fill="none" stroke="#b4b7b8" stroke-width="0.5"/><path d="M766 88.6h12.8" stroke="#d8e8fa" stroke-width="0.7" fill="none"/><path d="M813 97.2L808.6 93" stroke="#6c6c6c" stroke-width="3.3" stroke-linecap="round"/><path d="M801.7 77L811.4 86.9L801.7 96.8L792 86.9Z" fill="url(#gl)" stroke="#cfd2d4" stroke-width="1.6" stroke-linejoin="round"/><path d="M801.7 80.5V93.3M795.3 86.9H808.1" stroke="#fff" fill="none" stroke-width="1.2"/><path d="M801.7 78.6l-1.8 2.4h3.6zM801.7 95.2l-1.8 -2.4h3.6zM793.6 86.9l2.4 -1.8v3.6zM809.8 86.9l-2.4 -1.8v3.6z" fill="#fff"/></svg>
<div style="position:absolute;left:29px;top:114px;width:37px;height:25px;border:2px solid #8c8c8c;border-radius:6px;box-sizing:border-box;background:linear-gradient(#ffffff,#f3f1ee);"></div>
<svg style="position:absolute;left:0px;top:0px;" width="1336" height="955" viewBox="0 0 1336 955"><path d="M41.3 130.9L53.9 122.6" stroke="#222" stroke-width="0.8" fill="none" /><circle cx="41.3" cy="130.9" r="1.3" fill="#ff0000"/><circle cx="53.9" cy="122.6" r="1.3" fill="#ff0000"/></svg>
<div style="position:absolute;left:72px;top:118px;width:1px;height:17px;background:#cfcbc6;"></div>
<div style="position:absolute;left:73px;top:118px;width:1px;height:17px;background:#fbfaf8;"></div>
<div style="position:absolute;left:76px;top:112px;width:29px;height:29px;border:1px solid #6a6a6a;box-sizing:border-box;background:linear-gradient(#8c8c8c,#b4b4b4 40%,#dedede);"></div>
<svg style="position:absolute;left:0px;top:0px;" width="1336" height="955" viewBox="0 0 1336 955"><path d="M82 131.8L97.8 121.1" stroke="#000" stroke-width="1" fill="none" /><circle cx="82" cy="131.8" r="1.7" fill="#ff0000"/><circle cx="97.8" cy="121.1" r="1.7" fill="#ff0000"/><path d="M112.485 131.44L127.815 121.36" stroke="#000" stroke-width="1.1" fill="none" /><g transform="translate(131.1 119.2) rotate(-33.3263)"><path d="M0 0L-5.6 -2.4L-4.4 0L-5.6 2.4Z" fill="#000"/></g><g transform="translate(109.2 133.6) rotate(146.674)"><path d="M0 0L-5.6 -2.4L-4.4 0L-5.6 2.4Z" fill="#000"/></g><circle cx="120" cy="126.3" r="1.6" fill="#ff0000"/><path d="M142.1 131.8L158.25 121.09" stroke="#000" stroke-width="1.1" fill="none" /><g transform="translate(161.1 119.2) rotate(-33.5507)"><path d="M0 0L-5.6 -2.4L-4.4 0L-5.6 2.4Z" fill="#000"/></g><circle cx="142.1" cy="131.8" r="1.6" fill="#ff0000"/><path d="M187.4 118.6L179.6 126.2L185 133.7L191.5 132.4L195.7 128.6L189.1 125Z" stroke="#7c7c7c" stroke-width="0.9" fill="none" /><circle cx="187.4" cy="118.6" r="1.2" fill="#7c7c7c"/><circle cx="179.6" cy="126.2" r="1.2" fill="#7c7c7c"/><g transform="translate(219.3 116) scale(0.67 0.72)"><path d="M0.2 3.6L3.9 6.9C6 3.5 9.5 0.7 13.3 0.7C18 0.7 21.7 3.5 21.7 7.8C21.7 13.5 16.5 19 9.8 19L9.1 18.2C13.5 17 17.5 13.5 17.5 9.3C17.5 6.8 15.5 5.6 12.8 5.6C10.3 5.6 8.2 7.6 6.6 10.3L9.8 14L0.2 14.3Z" fill="#b9b7b5" stroke="#9a9a9a" stroke-width="0.6"/></g><path d="M215.5 122.6L221.5 129.1L218.5 132.4L224.5 135.4L233.7 131.5" stroke="#7c7c7c" stroke-width="0.9" fill="none" /><circle cx="215.5" cy="122.6" r="1.3" fill="#7c7c7c"/><circle cx="221.5" cy="129.1" r="1.1" fill="#7c7c7c"/><g transform="translate(264 116) scale(-0.67 0.72)"><path d="M0.2 3.6L3.9 6.9C6 3.5 9.5 0.7 13.3 0.7C18 0.7 21.7 3.5 21.7 7.8C21.7 13.5 16.5 19 9.8 19L9.1 18.2C13.5 17 17.5 13.5 17.5 9.3C17.5 6.8 15.5 5.6 12.8 5.6C10.3 5.6 8.2 7.6 6.6 10.3L9.8 14L0.2 14.3Z" fill="#b9b7b5" stroke="#9a9a9a" stroke-width="0.6"/></g><path d="M245.5 122.6L251.5 129.1L248.5 132.4L254.5 135.4L263.7 131.5" stroke="#7c7c7c" stroke-width="0.9" fill="none" /><circle cx="245.5" cy="122.6" r="1.3" fill="#7c7c7c"/><circle cx="251.5" cy="129.1" r="1.1" fill="#7c7c7c"/><path d="M282.9 119.4L282.9 114.9M286.7 119.9L287.8 115.5M290.1 121.3L292.4 117.4M293.2 123.6L296.3 120.5M296.9 130.1L301.3 129.0M297.4 133.9L301.9 133.9" stroke="#8a8a8a" stroke-width="0.8" fill="none" /><path d="M282.9 133.9L298.7 125" stroke="#222" stroke-width="1.1" fill="none" /><circle cx="282.9" cy="133.9" r="3.3" fill="#ffd0d0" stroke="#f01010" stroke-width="1"/><path d="M279.5 133.9h6.8M282.9 130.5v6.8" stroke="#f01010" stroke-width="0.9"/></svg>
<div style="position:absolute;left:169px;top:118px;width:1px;height:17px;background:#cfcbc6;"></div>
<div style="position:absolute;left:170px;top:118px;width:1px;height:17px;background:#fbfaf8;"></div>
<div style="position:absolute;left:206px;top:118px;width:1px;height:17px;background:#cfcbc6;"></div>
<div style="position:absolute;left:207px;top:118px;width:1px;height:17px;background:#fbfaf8;"></div>
<div style="position:absolute;left:273px;top:118px;width:1px;height:17px;background:#cfcbc6;"></div>
<div style="position:absolute;left:274px;top:118px;width:1px;height:17px;background:#fbfaf8;"></div>
<div style="position:absolute;left:310px;top:118px;width:1px;height:17px;background:#cfcbc6;"></div>
<div style="position:absolute;left:311px;top:118px;width:1px;height:17px;background:#fbfaf8;"></div>
<svg style="position:absolute;left:114px;top:152px;" width="16" height="16" viewBox="0 0 16 16"><defs><linearGradient id="gq" x1="0" y1="0" x2="1" y2="1"><stop offset="0" stop-color="#9aa8d4"/><stop offset="0.55" stop-color="#22408e"/><stop offset="1" stop-color="#1c357c"/></linearGradient></defs><circle cx="8.1" cy="7.6" r="5.4" fill="#fff" stroke="url(#gq)" stroke-width="2.2"/><path d="M4.6 7.2h6M7.6 4.4v6" stroke="#9a9a9a" stroke-width="0.6"/><path d="M5 9.4h3.4M8.6 5l1.2 1" stroke="#e06060" stroke-width="0.6"/><path d="M8.6 8.2L12.6 12.2" stroke="#f0a010" stroke-width="1.8" stroke-linecap="round"/><path d="M12.4 12L13.6 13.2" stroke="#e07070" stroke-width="1.7" stroke-linecap="round"/></svg>
<svg style="position:absolute;left:1310px;top:926px;shape-rendering:crispEdges;" width="12" height="12" viewBox="0 0 12 12"><rect x="10" y="1" width="1" height="1" fill="#fff"/><rect x="9" y="0" width="1" height="1" fill="#b4b0ab"/><rect x="7" y="4" width="1" height="1" fill="#fff"/><rect x="6" y="3" width="1" height="1" fill="#b4b0ab"/><rect x="10" y="4" width="1" height="1" fill="#fff"/><rect x="9" y="3" width="1" height="1" fill="#b4b0ab"/><rect x="4" y="7" width="1" height="1" fill="#fff"/><rect x="3" y="6" width="1" height="1" fill="#b4b0ab"/><rect x="7" y="7" width="1" height="1" fill="#fff"/><rect x="6" y="6" width="1" height="1" fill="#b4b0ab"/><rect x="10" y="7" width="1" height="1" fill="#fff"/><rect x="9" y="6" width="1" height="1" fill="#b4b0ab"/><rect x="1" y="10" width="1" height="1" fill="#fff"/><rect x="0" y="9" width="1" height="1" fill="#b4b0ab"/><rect x="4" y="10" width="1" height="1" fill="#fff"/><rect x="3" y="9" width="1" height="1" fill="#b4b0ab"/><rect x="7" y="10" width="1" height="1" fill="#fff"/><rect x="6" y="9" width="1" height="1" fill="#b4b0ab"/><rect x="10" y="10" width="1" height="1" fill="#fff"/><rect x="9" y="9" width="1" height="1" fill="#b4b0ab"/></svg>
<div style="position:absolute;left:1321px;top:48px;width:1px;height:890px;background:#fbfaf8;"></div>
<div style="position:absolute;left:14px;top:937px;width:1308px;height:1px;background:#fbfaf8;"></div>
</body></html>
